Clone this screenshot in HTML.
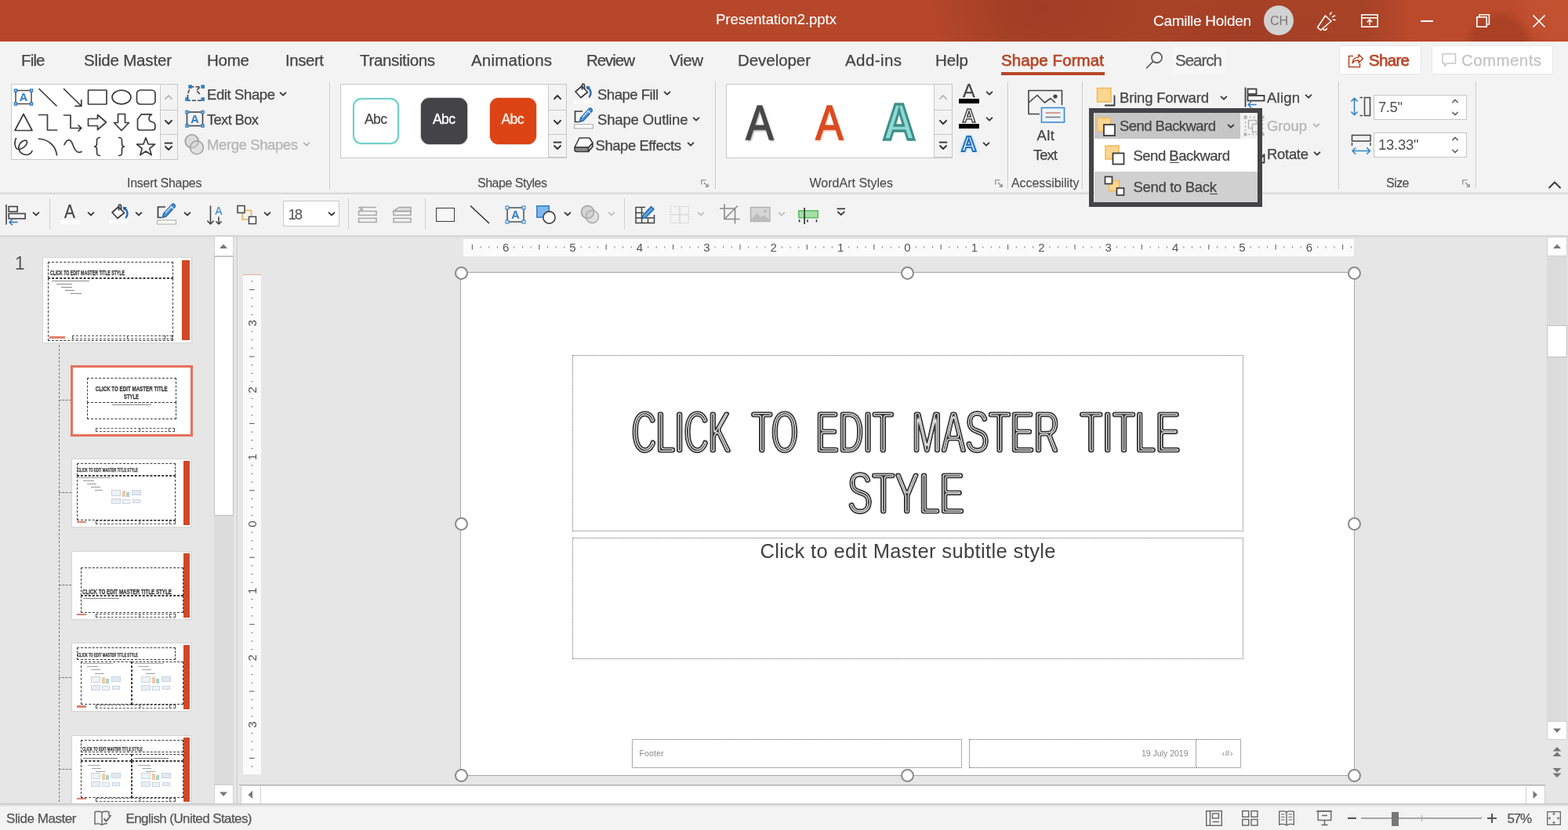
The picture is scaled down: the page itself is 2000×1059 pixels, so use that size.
<!DOCTYPE html>
<html lang="en"><head><meta charset="utf-8"><title>Presentation2.pptx - PowerPoint</title>
<style>
html,body{margin:0;padding:0;}
body{width:2000px;height:1059px;overflow:hidden;background:#e6e6e6;font-family:"Liberation Sans",sans-serif;position:relative;}
#app{position:absolute;left:0;top:0;width:2000px;height:1059px;overflow:hidden;will-change:transform;}
.b{position:absolute;display:block;box-sizing:border-box;}
.t{position:absolute;white-space:nowrap;margin:0;padding:0;-webkit-text-stroke-width:.25px;}
svg text{font-family:"Liberation Sans",sans-serif;}
</style></head>
<body>
<div id="app">
<!-- p1_top -->
<div class="b" style="left:0px;top:0px;width:2000px;height:53px;background:#b7472a;background:radial-gradient(circle 46px at 1912px 58px, rgba(150,52,28,.45) 0,rgba(150,52,28,.45) 70%, rgba(150,52,28,0) 100%),radial-gradient(circle 60px at 1990px 4px, rgba(205,92,55,.35) 0,rgba(205,92,55,.3) 70%, rgba(205,92,55,0) 100%),radial-gradient(ellipse 150px 80px at 1330px 10px, rgba(140,50,28,.35), rgba(140,50,28,0) 100%),radial-gradient(ellipse 120px 60px at 1580px 52px, rgba(140,50,28,.3), rgba(140,50,28,0) 100%),linear-gradient(90deg,#b7472a 0,#b7472a 1180px,#aa4328 1290px,#a74227 1740px,#ba4a2b 1800px,#bb4b2c 2000px);"></div>
<div class="t " style="left:913px;top:13px;font-size:18.5px;line-height:24px;color:#fff;letter-spacing:-0.016px;-webkit-text-stroke-width:.1px;">Presentation2.pptx</div>
<div class="t " style="left:1471px;top:14px;font-size:19px;line-height:25px;color:#fff;letter-spacing:-0.295px;-webkit-text-stroke-width:.1px;">Camille Holden</div>
<div class="b" style="left:1612px;top:7px;width:38px;height:38px;background:#d2d2d2;border-radius:50%;"></div>
<div class="t " style="left:1620px;top:16px;font-size:16px;line-height:21px;color:#777;letter-spacing:-0.110px;-webkit-text-stroke-width:0;">CH</div>
<svg class="b" style="left:1677px;top:12px;" width="30" height="30" viewBox="0 0 30 30"><g fill="none" stroke="#fff" stroke-width="1.6" stroke-linejoin="round" stroke-linecap="round"><path d="M3.5 23 L13.5 8 L21 15 L7.5 26.5 Z"/><path d="M10.5 24.5 C11.5 27.2 14.5 27 15.5 24.2"/><path d="M19.5 6.5 L21 4 M22.5 9.5 L25.5 8 M23.5 13 L26 13.5"/></g></svg>
<svg class="b" style="left:1735px;top:17px;" width="24" height="20" viewBox="0 0 24 20"><g fill="none" stroke="#fff" stroke-width="1.6"><rect x="1.8" y="1.8" width="20.4" height="15.4"/><path d="M1.8 5.8 H22.2"/><path d="M12 15 V8.5 M8.8 11.3 L12 8 L15.2 11.3"/></g></svg>
<div class="b" style="left:1812px;top:26px;width:16px;height:1.8px;background:#fff;"></div>
<svg class="b" style="left:1881px;top:16px;" width="22" height="20" viewBox="0 0 22 20"><g fill="none" stroke="#fff" stroke-width="1.6"><rect x="2.8" y="5.8" width="12.4" height="12.4"/><path d="M6 5.8 V2.8 H18.4 V15 H15.4"/></g></svg>
<svg class="b" style="left:1953px;top:17px;" width="20" height="20" viewBox="0 0 20 20"><g fill="none" stroke="#fff" stroke-width="1.7"><path d="M2.5 2.5 L17.5 17.5 M17.5 2.5 L2.5 17.5"/></g></svg>
<div class="b" style="left:0px;top:53px;width:2000px;height:47px;background:#f3f3f3;"></div>
<div class="t " style="left:27px;top:63px;font-size:20.5px;line-height:27px;color:#444;letter-spacing:-0.845px;">File</div>
<div class="t " style="left:107px;top:63px;font-size:20.5px;line-height:27px;color:#444;letter-spacing:-0.176px;">Slide Master</div>
<div class="t " style="left:264px;top:63px;font-size:20.5px;line-height:27px;color:#444;letter-spacing:-0.228px;">Home</div>
<div class="t " style="left:364px;top:63px;font-size:20.5px;line-height:27px;color:#444;letter-spacing:-0.454px;">Insert</div>
<div class="t " style="left:459px;top:63px;font-size:20.5px;line-height:27px;color:#444;letter-spacing:-0.350px;">Transitions</div>
<div class="t " style="left:601px;top:63px;font-size:20.5px;line-height:27px;color:#444;letter-spacing:0.176px;">Animations</div>
<div class="t " style="left:748px;top:63px;font-size:20.5px;line-height:27px;color:#444;letter-spacing:-1.044px;">Review</div>
<div class="t " style="left:854px;top:63px;font-size:20.5px;line-height:27px;color:#444;letter-spacing:-0.355px;">View</div>
<div class="t " style="left:941px;top:63px;font-size:20.5px;line-height:27px;color:#444;letter-spacing:-0.056px;">Developer</div>
<div class="t " style="left:1078px;top:63px;font-size:20.5px;line-height:27px;color:#444;letter-spacing:0.415px;">Add-ins</div>
<div class="t " style="left:1193px;top:63px;font-size:20.5px;line-height:27px;color:#444;letter-spacing:-0.054px;">Help</div>
<div class="t " style="left:1277px;top:63px;font-size:20.5px;line-height:27px;color:#b7472a;letter-spacing:0.100px;-webkit-text-stroke:.75px #b7472a;">Shape Format</div>
<div class="b" style="left:1277px;top:92px;width:132px;height:3.5px;background:#b7472a;"></div>
<div class="b" style="left:1496px;top:60px;width:66px;height:34px;background:#f7f7f7;"></div>
<svg class="b" style="left:1459px;top:64px;" width="28" height="26" viewBox="0 0 28 26"><g fill="none" stroke="#555" stroke-width="1.6" stroke-linecap="round"><circle cx="16.5" cy="9.5" r="6.6"/><path d="M11.8 14.4 L3.5 22.8"/></g></svg>
<div class="t " style="left:1499px;top:63px;font-size:20.5px;line-height:27px;color:#555;letter-spacing:-0.991px;">Search</div>
<div class="b" style="left:1709px;top:59px;width:103px;height:35px;background:#fff;box-shadow:0 0 2px rgba(0,0,0,.18);border-radius:2px;"></div>
<svg class="b" style="left:1717px;top:65px;" width="24" height="24" viewBox="0 0 24 24"><g fill="none" stroke="#b7472a" stroke-width="1.6" stroke-linejoin="round"><path d="M9 6.5 H3.5 V20.5 H17.5 V16"/><path d="M8 15.5 C8.5 11 11.5 8.2 16 8 V4.5 L21.5 10 L16 15.2 V11.8 C12.5 11.8 10 13 8 15.5 Z"/></g></svg>
<div class="t " style="left:1746px;top:63px;font-size:20.5px;line-height:27px;color:#b7472a;letter-spacing:-0.677px;-webkit-text-stroke:.75px #b7472a;">Share</div>
<div class="b" style="left:1827px;top:59px;width:153px;height:35px;background:#fff;box-shadow:0 0 2px rgba(0,0,0,.14);border-radius:2px;"></div>
<svg class="b" style="left:1837px;top:66px;" width="24" height="24" viewBox="0 0 24 24"><g fill="none" stroke="#c8c8c8" stroke-width="1.5" stroke-linejoin="round"><path d="M3 2.8 H19.5 V14.8 H9 L5.5 18.5 V14.8 H3 Z"/></g></svg>
<div class="t " style="left:1864px;top:63px;font-size:20.5px;line-height:27px;color:#c3c3c3;letter-spacing:0.413px;">Comments</div>
<!-- p2_ribbon -->
<div class="b" style="left:0px;top:100px;width:2000px;height:145px;background:#f3f3f3;"></div>
<div class="b" style="left:0px;top:245.5px;width:2000px;height:2px;background:#dadada;"></div>
<div class="b" style="left:14px;top:107px;width:212.5px;height:96.5px;background:#fff;border:1px solid #c8c8c8;"></div><div class="b" style="left:203.5px;top:107px;width:23px;height:96.5px;background:#f3f3f3;border:1px solid #c8c8c8;"></div><div class="b" style="left:203.5px;top:139.5px;width:23px;height:1px;background:#c8c8c8;"></div><div class="b" style="left:203.5px;top:171px;width:23px;height:1px;background:#c8c8c8;"></div><svg class="b" style="left:207px;top:117.5px;" width="16" height="12" viewBox="0 0 16 12"><path d="M4 8.1 L8 3.9 L12 8.1" fill="none" stroke="#bdbdbd" stroke-width="2.1" stroke-linecap="round" stroke-linejoin="round"/></svg><svg class="b" style="left:207px;top:149.5px;" width="16" height="12" viewBox="0 0 16 12"><path d="M4 3.9 L8 8.1 L12 3.9" fill="none" stroke="#333" stroke-width="2.1" stroke-linecap="round" stroke-linejoin="round"/></svg><svg class="b" style="left:207px;top:179px;" width="16" height="16" viewBox="0 0 16 16"><g fill="none" stroke="#333" stroke-width="1.9" stroke-linejoin="round"><path d="M2.8 3.6 H13.2"/><path d="M4 8 L8 12 L12 8" stroke-linecap="round"/></g></svg><svg class="b" style="left:16px;top:110px;" width="28" height="28" viewBox="0 0 28 28"><rect x="4" y="5.5" width="20" height="17" fill="none" stroke="#5a4a40" stroke-width="1.5"/><g fill="#9ccbf0" stroke="#2f7ec6" stroke-width="1.3"><rect x="2.4" y="3.9" width="3.2" height="3.2"/><rect x="22.4" y="3.9" width="3.2" height="3.2"/><rect x="2.4" y="20.9" width="3.2" height="3.2"/><rect x="22.4" y="20.9" width="3.2" height="3.2"/></g><text x="14" y="19.2" font-size="14.5" font-weight="700" text-anchor="middle" fill="#2f7ec6">A</text></svg><svg class="b" style="left:47px;top:110px;" width="28" height="28" viewBox="0 0 28 28"><g fill="none" stroke="#3c3c3c" stroke-width="1.7" stroke-linejoin="round" stroke-linecap="round"><path d="M3 3.5 L25 25"/></g></svg><svg class="b" style="left:78.5px;top:110px;" width="28" height="28" viewBox="0 0 28 28"><g fill="none" stroke="#3c3c3c" stroke-width="1.7" stroke-linejoin="round" stroke-linecap="round"><path d="M2.5 3.5 L24.5 25 M24.8 17.5 V25.3 H17"/></g></svg><svg class="b" style="left:110px;top:110px;" width="28" height="28" viewBox="0 0 28 28"><g fill="none" stroke="#3c3c3c" stroke-width="1.7" stroke-linejoin="round" stroke-linecap="round"><rect x="2.5" y="5" width="23.5" height="18" rx="0.5"/></g></svg><svg class="b" style="left:141px;top:110px;" width="28" height="28" viewBox="0 0 28 28"><g fill="none" stroke="#3c3c3c" stroke-width="1.7" stroke-linejoin="round" stroke-linecap="round"><ellipse cx="14" cy="14" rx="12" ry="8.8"/></g></svg><svg class="b" style="left:172px;top:110px;" width="28" height="28" viewBox="0 0 28 28"><g fill="none" stroke="#3c3c3c" stroke-width="1.7" stroke-linejoin="round" stroke-linecap="round"><rect x="2.5" y="5" width="23.5" height="18" rx="4.5"/></g></svg><svg class="b" style="left:16px;top:141.5px;" width="28" height="28" viewBox="0 0 28 28"><g fill="none" stroke="#3c3c3c" stroke-width="1.7" stroke-linejoin="round" stroke-linecap="round"><path d="M14 3.5 L25 24.5 H3 Z"/></g></svg><svg class="b" style="left:47px;top:141.5px;" width="28" height="28" viewBox="0 0 28 28"><g fill="none" stroke="#3c3c3c" stroke-width="1.7" stroke-linejoin="round" stroke-linecap="round"><path d="M2.5 4.5 H13.5 V24 H25.5"/></g></svg><svg class="b" style="left:78.5px;top:141.5px;" width="28" height="28" viewBox="0 0 28 28"><g fill="none" stroke="#3c3c3c" stroke-width="1.7" stroke-linejoin="round" stroke-linecap="round"><path d="M2.5 5 H11 V21.5 H24.5 M21 17.8 L24.8 21.5 L21 25.2"/></g></svg><svg class="b" style="left:110px;top:141.5px;" width="28" height="28" viewBox="0 0 28 28"><g fill="none" stroke="#3c3c3c" stroke-width="1.7" stroke-linejoin="round" stroke-linecap="round"><path d="M2.5 9.5 H14.5 V4.5 L25.5 14 L14.5 23.5 V18.5 H2.5 Z"/></g></svg><svg class="b" style="left:141px;top:141.5px;" width="28" height="28" viewBox="0 0 28 28"><g fill="none" stroke="#3c3c3c" stroke-width="1.7" stroke-linejoin="round" stroke-linecap="round"><path d="M9.5 3.5 H18.5 V14.5 H23.5 L14 24.5 L4.5 14.5 H9.5 Z"/></g></svg><svg class="b" style="left:172px;top:141.5px;" width="28" height="28" viewBox="0 0 28 28"><g fill="none" stroke="#3c3c3c" stroke-width="1.7" stroke-linejoin="round" stroke-linecap="round"><path d="M3.5 10 L8.5 3.8 H21.5 C17 6.5 16.5 12.5 22 13.5 C24.5 14 25.8 15.5 25.8 18 V21 C25.8 23 24.5 24 22.5 24 H6.5 C4.6 24 3.5 23 3.5 21.5 Z"/></g></svg><svg class="b" style="left:16px;top:173px;" width="28" height="28" viewBox="0 0 28 28"><g fill="none" stroke="#3c3c3c" stroke-width="1.7" stroke-linejoin="round" stroke-linecap="round"><path d="M4.5 3.5 C1.5 9 3 19 9.5 17.5 C15 16 20 10 18 7 C16 4 9 8.5 8 14 C7 19.5 11.5 24.5 17 24.5 C21 24.5 24 22.5 25 19.5"/></g></svg><svg class="b" style="left:47px;top:173px;" width="28" height="28" viewBox="0 0 28 28"><g fill="none" stroke="#3c3c3c" stroke-width="1.7" stroke-linejoin="round" stroke-linecap="round"><path d="M2.5 4 C14 5 24 12 25.5 25"/></g></svg><svg class="b" style="left:78.5px;top:173px;" width="28" height="28" viewBox="0 0 28 28"><g fill="none" stroke="#3c3c3c" stroke-width="1.7" stroke-linejoin="round" stroke-linecap="round"><path d="M3 11.5 C7 3.5 11 3.5 14 12 C17 20.5 21 23 25 20.5"/></g></svg><svg class="b" style="left:110px;top:173px;" width="28" height="28" viewBox="0 0 28 28"><g fill="none" stroke="#3c3c3c" stroke-width="1.7" stroke-linejoin="round" stroke-linecap="round"><path d="M17.5 2.5 C14 2.5 13.5 4 13.5 6.5 V10.5 C13.5 12.5 12.5 13.8 10.5 14 C12.5 14.2 13.5 15.5 13.5 17.5 V21.5 C13.5 24 14 25.5 17.5 25.5"/></g></svg><svg class="b" style="left:141px;top:173px;" width="28" height="28" viewBox="0 0 28 28"><g fill="none" stroke="#3c3c3c" stroke-width="1.7" stroke-linejoin="round" stroke-linecap="round"><path d="M10.5 2.5 C14 2.5 14.5 4 14.5 6.5 V10.5 C14.5 12.5 15.5 13.8 17.5 14 C15.5 14.2 14.5 15.5 14.5 17.5 V21.5 C14.5 24 14 25.5 10.5 25.5"/></g></svg><svg class="b" style="left:172px;top:173px;" width="28" height="28" viewBox="0 0 28 28"><g fill="none" stroke="#3c3c3c" stroke-width="1.7" stroke-linejoin="round" stroke-linecap="round"><path d="M14 2.8 L17 10.8 L25.6 11.2 L18.8 16.5 L21.2 24.8 L14 20 L6.8 24.8 L9.2 16.5 L2.4 11.2 L11 10.8 Z"/></g></svg>
<svg class="b" style="left:234.5px;top:107px;" width="28" height="26" viewBox="0 0 28 26"><path d="M7.5 3.8 H20.5 L15.5 8.5 L20 13 M22 21.3 H4.5 M4.2 19 C4.4 13 5.5 8.5 8 4.5" fill="none" stroke="#444" stroke-width="1.6" stroke-dasharray="5 2"/><g fill="#2f7ec6"><rect x="5.3" y="1.3" width="4.6" height="4.6"/><rect x="21.4" y="1.3" width="4.6" height="4.6"/><rect x="1.2" y="17.3" width="4.6" height="4.6"/><rect x="21.4" y="17.3" width="4.6" height="4.6"/></g></svg>
<div class="t " style="left:264px;top:108.5px;font-size:18.5px;line-height:24px;color:#444;letter-spacing:-0.391px;">Edit Shape</div>
<svg class="b" style="left:353px;top:113.5px;" width="16" height="12" viewBox="0 0 16 12"><path d="M4.6 4.35 L8 7.65 L11.4 4.35" fill="none" stroke="#3a3a3a" stroke-width="1.9" stroke-linecap="round" stroke-linejoin="round"/></svg>
<svg class="b" style="left:234px;top:138px;" width="28" height="28" viewBox="0 0 28 28"><rect x="4.5" y="5" width="20" height="17.5" fill="none" stroke="#444" stroke-width="1.6"/><g fill="#9ccbf0" stroke="#2f7ec6" stroke-width="1.3"><rect x="2.9" y="3.4" width="3.2" height="3.2"/><rect x="22.9" y="3.4" width="3.2" height="3.2"/><rect x="2.9" y="20.9" width="3.2" height="3.2"/><rect x="22.9" y="20.9" width="3.2" height="3.2"/></g><text x="14.5" y="19.2" font-size="14.5" font-weight="700" text-anchor="middle" fill="#2f7ec6">A</text></svg>
<div class="t " style="left:264px;top:140.5px;font-size:18.5px;line-height:24px;color:#444;letter-spacing:-0.707px;">Text Box</div>
<svg class="b" style="left:234px;top:170px;" width="30" height="30" viewBox="0 0 30 30"><g stroke="#a4a4a4" stroke-width="1.6"><circle cx="10.7" cy="10.2" r="8.4" fill="#dcdcdc"/><circle cx="17" cy="18.3" r="8.4" fill="#dcdcdc" fill-opacity=".8"/><circle cx="10.7" cy="10.2" r="8.4" fill="none" stroke-opacity=".6"/></g></svg>
<div class="t " style="left:264px;top:173px;font-size:18.5px;line-height:24px;color:#b4b4b4;letter-spacing:-0.393px;">Merge Shapes</div>
<svg class="b" style="left:383px;top:178px;" width="16" height="12" viewBox="0 0 16 12"><path d="M4.6 4.35 L8 7.65 L11.4 4.35" fill="none" stroke="#b4b4b4" stroke-width="1.9" stroke-linecap="round" stroke-linejoin="round"/></svg>
<div class="t " style="left:162px;top:223px;font-size:16px;line-height:21px;color:#4a4a4a;letter-spacing:-0.269px;-webkit-text-stroke-width:.1px;">Insert Shapes</div>
<div class="b" style="left:420px;top:104px;width:1px;height:137px;background:#c8c8c8;"></div><div class="b" style="left:421px;top:104px;width:1px;height:137px;background:#fafafa;"></div>
<div class="b" style="left:434px;top:107px;width:289px;height:94.5px;background:#fff;border:1px solid #c8c8c8;"></div>
<div class="b" style="left:699px;top:107px;width:23.5px;height:94px;background:#f3f3f3;border:1px solid #c8c8c8;"></div><div class="b" style="left:699px;top:139.5px;width:23.5px;height:1px;background:#c8c8c8;"></div><div class="b" style="left:699px;top:170.5px;width:23.5px;height:1px;background:#c8c8c8;"></div><svg class="b" style="left:702.75px;top:117.5px;" width="16" height="12" viewBox="0 0 16 12"><path d="M4 8.1 L8 3.9 L12 8.1" fill="none" stroke="#333" stroke-width="2.1" stroke-linecap="round" stroke-linejoin="round"/></svg><svg class="b" style="left:702.75px;top:149.5px;" width="16" height="12" viewBox="0 0 16 12"><path d="M4 3.9 L8 8.1 L12 3.9" fill="none" stroke="#333" stroke-width="2.1" stroke-linecap="round" stroke-linejoin="round"/></svg><svg class="b" style="left:702.75px;top:178px;" width="16" height="16" viewBox="0 0 16 16"><g fill="none" stroke="#333" stroke-width="1.9" stroke-linejoin="round"><path d="M2.8 3.6 H13.2"/><path d="M4 8 L8 12 L12 8" stroke-linecap="round"/></g></svg>
<div class="b" style="left:450px;top:124.5px;width:59px;height:59px;background:#fff;border:2px solid #6fd0ca;border-radius:11px;box-shadow:0 0 2px rgba(111,208,202,.6);"></div>
<div class="t " style="left:465px;top:140.5px;font-size:17.5px;line-height:23px;color:#444;letter-spacing:-0.578px;">Abc</div>
<div class="b" style="left:537px;top:124.5px;width:59px;height:59px;background:#444446;border-radius:11px;box-shadow:0 0 1.5px #222;"></div>
<div class="t " style="left:552px;top:140.5px;font-size:17.5px;line-height:23px;color:#fff;letter-spacing:-0.578px;-webkit-text-stroke:0.4px #fff;">Abc</div>
<div class="b" style="left:624.5px;top:124.5px;width:59px;height:59px;background:#dc4415;border-radius:11px;box-shadow:0 0 1.5px #b8360f;"></div>
<div class="t " style="left:639.5px;top:140.5px;font-size:17.5px;line-height:23px;color:#fdeee6;letter-spacing:-0.578px;-webkit-text-stroke:0.4px #fdeee6;">Abc</div>
<svg class="b" style="left:730px;top:104px;" width="30" height="32" viewBox="0 0 30 32"><g fill="none" stroke="#3c3c3c" stroke-width="1.7" stroke-linejoin="round" stroke-linecap="round"><path d="M12 6 L19.5 13.5 L11 20.5 L4 13 Z" fill="#fff"/><path d="M12.5 10 V4.5 C12.5 2.5 15.5 2.5 15.5 5 V9.2"/></g><path d="M19 8.2 C23.5 9.5 25 14.5 21.8 19.5" fill="none" stroke="#2668ad" stroke-width="2.3" stroke-linecap="round"/><path d="M17.5 5.8 L23 6.4 L19.4 10.8 Z" fill="#2668ad"/><rect x="2" y="23.8" width="25" height="4.2" fill="#fff"/></svg>
<div class="t " style="left:762px;top:108.6px;font-size:18.5px;line-height:24px;color:#444;letter-spacing:-0.474px;">Shape Fill</div>
<svg class="b" style="left:842.5px;top:113px;" width="16" height="12" viewBox="0 0 16 12"><path d="M4.6 4.35 L8 7.65 L11.4 4.35" fill="none" stroke="#3a3a3a" stroke-width="1.9" stroke-linecap="round" stroke-linejoin="round"/></svg>
<svg class="b" style="left:730px;top:136px;" width="30" height="32" viewBox="0 0 30 32"><path d="M13 6 H3.5 V19.5 H8.5" fill="none" stroke="#3c3c3c" stroke-width="1.7"/><path d="M21.8 2.5 C23.5 1.2 26.5 4 25 6 L14 18 L9.2 19.6 L10.6 14.6 Z" fill="#4a97dc" stroke="#2668ad" stroke-width="1.5" stroke-linejoin="round"/><path d="M20 5.2 L23.4 8.6" stroke="#fff" stroke-width="1.1"/><path d="M13 13.5 L21 5" stroke="#d9ecfb" stroke-width="1.2"/><rect x="2.5" y="22.8" width="24" height="5" fill="#fff" stroke="#a8a8a8" stroke-width="1"/></svg>
<div class="t " style="left:762px;top:141.1px;font-size:18.5px;line-height:24px;color:#444;letter-spacing:-0.146px;">Shape Outline</div>
<svg class="b" style="left:879.5px;top:145.5px;" width="16" height="12" viewBox="0 0 16 12"><path d="M4.6 4.35 L8 7.65 L11.4 4.35" fill="none" stroke="#3a3a3a" stroke-width="1.9" stroke-linecap="round" stroke-linejoin="round"/></svg>
<svg class="b" style="left:730px;top:171px;" width="30" height="28" viewBox="0 0 30 28"><g stroke="#3c3c3c" stroke-width="1.6" stroke-linejoin="round"><path d="M9 5 H22 L26 11.5 L20.5 17 H3 Z" fill="#fff"/><path d="M3 17 H20.5 V22.5 H6 C4 22.5 3 21.5 3 20 Z" fill="#8a8a8a"/><path d="M26 11.5 V16 L20.5 22.5 V17 Z" fill="#c4c4c4"/></g></svg>
<div class="t " style="left:759.5px;top:173.7px;font-size:18.5px;line-height:24px;color:#444;letter-spacing:-0.446px;">Shape Effects</div>
<svg class="b" style="left:872.5px;top:178.3px;" width="16" height="12" viewBox="0 0 16 12"><path d="M4.6 4.35 L8 7.65 L11.4 4.35" fill="none" stroke="#3a3a3a" stroke-width="1.9" stroke-linecap="round" stroke-linejoin="round"/></svg>
<div class="t " style="left:609px;top:223px;font-size:16px;line-height:21px;color:#4a4a4a;letter-spacing:-0.480px;-webkit-text-stroke-width:.1px;">Shape Styles</div>
<svg class="b" style="left:894px;top:229px;" width="11" height="11" viewBox="0 0 11 11"><g fill="none" stroke="#808080" stroke-width="1.1"><path d="M0.8 6.5 V0.8 H6.5"/><path d="M4 4 L9 9 M9.2 5.4 V9.2 H5.4"/></g></svg>
<div class="b" style="left:912px;top:104px;width:1px;height:137px;background:#c8c8c8;"></div><div class="b" style="left:913px;top:104px;width:1px;height:137px;background:#fafafa;"></div>
<div class="b" style="left:926px;top:107px;width:289px;height:94.5px;background:#fff;border:1px solid #c8c8c8;"></div>
<div class="b" style="left:1191px;top:107px;width:23.5px;height:94px;background:#f3f3f3;border:1px solid #c8c8c8;"></div><div class="b" style="left:1191px;top:139.5px;width:23.5px;height:1px;background:#c8c8c8;"></div><div class="b" style="left:1191px;top:170.5px;width:23.5px;height:1px;background:#c8c8c8;"></div><svg class="b" style="left:1194.75px;top:117.5px;" width="16" height="12" viewBox="0 0 16 12"><path d="M4 8.1 L8 3.9 L12 8.1" fill="none" stroke="#bdbdbd" stroke-width="2.1" stroke-linecap="round" stroke-linejoin="round"/></svg><svg class="b" style="left:1194.75px;top:149.5px;" width="16" height="12" viewBox="0 0 16 12"><path d="M4 3.9 L8 8.1 L12 3.9" fill="none" stroke="#333" stroke-width="2.1" stroke-linecap="round" stroke-linejoin="round"/></svg><svg class="b" style="left:1194.75px;top:178px;" width="16" height="16" viewBox="0 0 16 16"><g fill="none" stroke="#333" stroke-width="1.9" stroke-linejoin="round"><path d="M2.8 3.6 H13.2"/><path d="M4 8 L8 12 L12 8" stroke-linecap="round"/></g></svg>
<div class="t" style="left:948px;top:121px;width:42px;text-align:center;font-size:63px;line-height:70px;color:#484848;-webkit-text-stroke:1.6px #484848;text-shadow:1.5px 2px 3px rgba(0,0,0,.4);transform:scaleX(.84);">A</div>
<div class="t" style="left:1037px;top:121px;width:42px;text-align:center;font-size:63px;line-height:70px;color:#dc4a1f;-webkit-text-stroke:1.6px #dc4a1f;text-shadow:1px 2px 3px rgba(220,74,31,.45);transform:scaleX(.84);">A</div>
<div class="t" style="left:1124px;top:121px;width:42px;text-align:center;font-size:64px;line-height:70px;color:#8fdad4;font-weight:700;-webkit-text-stroke:3.4px #3f8f89;transform:scaleX(.9);">A</div>
<div class="t " style="left:1228px;top:101px;font-size:23.5px;line-height:31px;color:#444;">A</div>
<div class="b" style="left:1223px;top:126px;width:25.5px;height:6px;background:#000;"></div>
<svg class="b" style="left:1254px;top:113px;" width="16" height="12" viewBox="0 0 16 12"><path d="M4.6 4.35 L8 7.65 L11.4 4.35" fill="none" stroke="#3a3a3a" stroke-width="1.9" stroke-linecap="round" stroke-linejoin="round"/></svg>
<div class="t " style="left:1227.5px;top:133px;font-size:23.5px;line-height:31px;color:#fff;-webkit-text-stroke:1.5px #444;font-weight:700;">A</div>
<div class="b" style="left:1223px;top:158px;width:25.5px;height:6px;background:#000;"></div>
<svg class="b" style="left:1254px;top:145.5px;" width="16" height="12" viewBox="0 0 16 12"><path d="M4.6 4.35 L8 7.65 L11.4 4.35" fill="none" stroke="#3a3a3a" stroke-width="1.9" stroke-linecap="round" stroke-linejoin="round"/></svg>
<div class="t " style="left:1226px;top:166.5px;font-size:27px;line-height:35px;color:#eaf5ff;-webkit-text-stroke:2px #1f6fbf;font-weight:700;text-shadow:0 0 3px #6fb8f5,0 0 5px #9fd0fa;">A</div>
<svg class="b" style="left:1250px;top:178px;" width="16" height="12" viewBox="0 0 16 12"><path d="M4.6 4.35 L8 7.65 L11.4 4.35" fill="none" stroke="#3a3a3a" stroke-width="1.9" stroke-linecap="round" stroke-linejoin="round"/></svg>
<div class="t " style="left:1032.5px;top:223px;font-size:16px;line-height:21px;color:#4a4a4a;letter-spacing:0.008px;-webkit-text-stroke-width:.1px;">WordArt Styles</div>
<svg class="b" style="left:1269px;top:229px;" width="11" height="11" viewBox="0 0 11 11"><g fill="none" stroke="#808080" stroke-width="1.1"><path d="M0.8 6.5 V0.8 H6.5"/><path d="M4 4 L9 9 M9.2 5.4 V9.2 H5.4"/></g></svg>
<div class="b" style="left:1285px;top:104px;width:1px;height:137px;background:#c8c8c8;"></div><div class="b" style="left:1286px;top:104px;width:1px;height:137px;background:#fafafa;"></div>
<svg class="b" style="left:1309px;top:112px;" width="52" height="48" viewBox="0 0 52 48"><g fill="none" stroke="#444" stroke-width="1.6" stroke-linejoin="round"><path d="M17 33.5 H3 V3.5 H45.5 V22"/><path d="M3 19 L14 9.5 L23.5 19 L31 13.5 L37 19"/></g><circle cx="37" cy="11" r="2.6" fill="#444"/><rect x="19.5" y="25.5" width="29" height="18.5" fill="#eaf4fc" stroke="#3b8ad0" stroke-width="1.6"/><path d="M24.5 32 H43.5" stroke="#d0806a" stroke-width="1.5"/><path d="M24.5 37.5 H43.5" stroke="#777" stroke-width="1.5"/></svg>
<div class="t " style="left:1322.5px;top:161px;font-size:18.5px;line-height:24px;color:#444;letter-spacing:0.455px;">Alt</div>
<div class="t " style="left:1318px;top:185.5px;font-size:18.5px;line-height:24px;color:#444;letter-spacing:-0.976px;">Text</div>
<div class="t " style="left:1290px;top:223px;font-size:16px;line-height:21px;color:#4a4a4a;letter-spacing:-0.053px;-webkit-text-stroke-width:.1px;">Accessibility</div>
<div class="b" style="left:1380px;top:104px;width:1px;height:137px;background:#c8c8c8;"></div><div class="b" style="left:1381px;top:104px;width:1px;height:137px;background:#fafafa;"></div>
<svg class="b" style="left:1397px;top:110px;" width="28" height="28" viewBox="0 0 28 28"><path d="M12 24.5 H24.5 V11.5" fill="none" stroke="#3a3a3a" stroke-width="1.8"/><rect x="2.5" y="2.5" width="17.5" height="17.5" fill="#fbd691" stroke="#f3b95b" stroke-width="1.6"/></svg>
<div class="t " style="left:1428px;top:112.5px;font-size:18.5px;line-height:24px;color:#444;letter-spacing:-0.182px;">Bring Forward</div>
<svg class="b" style="left:1552.5px;top:118.5px;" width="16" height="12" viewBox="0 0 16 12"><path d="M4.6 4.35 L8 7.65 L11.4 4.35" fill="none" stroke="#3a3a3a" stroke-width="1.9" stroke-linecap="round" stroke-linejoin="round"/></svg>
<div class="b" style="left:1396px;top:144px;width:186px;height:33px;background:#c6c6c6;"></div>
<svg class="b" style="left:1397px;top:147.5px;" width="28" height="28" viewBox="0 0 28 28"><rect x="2.5" y="2.5" width="17" height="17" fill="#fbd691" stroke="#f3b95b" stroke-width="1.6"/><rect x="11" y="11" width="14" height="14" fill="#fff" stroke="#3a3a3a" stroke-width="1.8"/></svg>
<div class="t " style="left:1428px;top:149px;font-size:18.5px;line-height:24px;color:#444;letter-spacing:-0.548px;">Send Backward</div>
<svg class="b" style="left:1561.5px;top:155px;" width="16" height="12" viewBox="0 0 16 12"><path d="M4.6 4.35 L8 7.65 L11.4 4.35" fill="none" stroke="#3a3a3a" stroke-width="1.9" stroke-linecap="round" stroke-linejoin="round"/></svg>
<svg class="b" style="left:1585px;top:110px;" width="30" height="28" viewBox="0 0 30 28"><g fill="none" stroke="#3a3a3a" stroke-width="1.8"><path d="M3.5 1.5 V26.5"/><rect x="6.5" y="3.5" width="11" height="6.5" fill="#fff"/><rect x="6.5" y="12" width="21" height="6.5" fill="#fff"/></g><path d="M17 23.5 H7 M10.5 20 L7 23.5 L10.5 27" fill="none" stroke="#2f7ec6" stroke-width="1.6" stroke-linecap="round" stroke-linejoin="round"/></svg>
<div class="t " style="left:1616px;top:112.5px;font-size:18.5px;line-height:24px;color:#444;letter-spacing:0.215px;">Align</div>
<svg class="b" style="left:1661px;top:117px;" width="16" height="12" viewBox="0 0 16 12"><path d="M4.6 4.35 L8 7.65 L11.4 4.35" fill="none" stroke="#3a3a3a" stroke-width="1.9" stroke-linecap="round" stroke-linejoin="round"/></svg>
<svg class="b" style="left:1585px;top:146px;" width="30" height="30" viewBox="0 0 30 30"><g fill="none" stroke="#b4b4b4" stroke-width="1.4"><rect x="3.5" y="3.5" width="22" height="22" stroke-dasharray="2.5 2.5"/><rect x="7.5" y="7.5" width="10" height="10" fill="#f3f3f3"/><rect x="12.5" y="12.5" width="10" height="10" fill="#f3f3f3"/></g><g fill="#b4b4b4"><rect x="1.5" y="1.5" width="4" height="4"/><rect x="23.5" y="1.5" width="4" height="4"/><rect x="1.5" y="23.5" width="4" height="4"/><rect x="23.5" y="23.5" width="4" height="4"/></g></svg>
<div class="t " style="left:1616px;top:149px;font-size:18.5px;line-height:24px;color:#b4b4b4;letter-spacing:-0.105px;">Group</div>
<svg class="b" style="left:1670.5px;top:154px;" width="16" height="12" viewBox="0 0 16 12"><path d="M4.6 4.35 L8 7.65 L11.4 4.35" fill="none" stroke="#b4b4b4" stroke-width="1.9" stroke-linecap="round" stroke-linejoin="round"/></svg>
<svg class="b" style="left:1585px;top:183px;" width="30" height="28" viewBox="0 0 30 28"><g fill="none" stroke="#3a3a3a" stroke-width="1.8" stroke-linejoin="round"><path d="M3.5 24.5 H16.5 L3.5 11.5 Z" fill="#fff"/><path d="M19 24.5 H27.5 V14 Z" fill="#fff"/></g></svg>
<div class="t " style="left:1616px;top:185px;font-size:18.5px;line-height:24px;color:#444;letter-spacing:-0.301px;">Rotate</div>
<svg class="b" style="left:1671.5px;top:190px;" width="16" height="12" viewBox="0 0 16 12"><path d="M4.6 4.35 L8 7.65 L11.4 4.35" fill="none" stroke="#3a3a3a" stroke-width="1.9" stroke-linecap="round" stroke-linejoin="round"/></svg>
<div class="b" style="left:1707px;top:104px;width:1px;height:137px;background:#c8c8c8;"></div><div class="b" style="left:1708px;top:104px;width:1px;height:137px;background:#fafafa;"></div>
<svg class="b" style="left:1721px;top:121px;" width="30" height="30" viewBox="0 0 30 30"><g fill="none" stroke="#444" stroke-width="1.5"><rect x="19.5" y="3.5" width="7" height="23"/><path d="M13.5 3.5 H17 M13.5 26.5 H17"/></g><g fill="none" stroke="#2f86c8" stroke-width="1.6" stroke-linecap="round" stroke-linejoin="round"><path d="M6.5 4.5 V25.5 M2.8 8 L6.5 4.2 L10.2 8 M2.8 22 L6.5 25.8 L10.2 22"/></g></svg>
<div class="b" style="left:1752px;top:120.5px;width:119px;height:32px;background:#fff;border:1px solid #c6c6c6;"></div>
<div class="t " style="left:1758px;top:125px;font-size:18.5px;line-height:24px;color:#505050;letter-spacing:-0.428px;-webkit-text-stroke-width:0;">7.5&quot;</div>
<svg class="b" style="left:1848px;top:123px;" width="16" height="12" viewBox="0 0 16 12"><path d="M4.75 7.6 L8 4.4 L11.25 7.6" fill="none" stroke="#666" stroke-width="1.5" stroke-linecap="round" stroke-linejoin="round"/></svg>
<svg class="b" style="left:1848px;top:139px;" width="16" height="12" viewBox="0 0 16 12"><path d="M4.75 4.4 L8 7.6 L11.25 4.4" fill="none" stroke="#666" stroke-width="1.5" stroke-linecap="round" stroke-linejoin="round"/></svg>
<svg class="b" style="left:1721px;top:169px;" width="30" height="30" viewBox="0 0 30 30"><g fill="none" stroke="#444" stroke-width="1.5"><rect x="3.5" y="3.5" width="23.5" height="7.5"/><path d="M3.5 13 V17 M27 13 V17"/></g><g fill="none" stroke="#2f86c8" stroke-width="1.6" stroke-linecap="round" stroke-linejoin="round"><path d="M4 23.5 H26.5 M7.8 19.8 L4 23.5 L7.8 27.2 M22.7 19.8 L26.5 23.5 L22.7 27.2"/></g></svg>
<div class="b" style="left:1752px;top:168.5px;width:119px;height:32px;background:#fff;border:1px solid #c6c6c6;"></div>
<div class="t " style="left:1758px;top:173px;font-size:18.5px;line-height:24px;color:#505050;letter-spacing:-0.273px;-webkit-text-stroke-width:0;">13.33&quot;</div>
<svg class="b" style="left:1848px;top:170.5px;" width="16" height="12" viewBox="0 0 16 12"><path d="M4.75 7.6 L8 4.4 L11.25 7.6" fill="none" stroke="#666" stroke-width="1.5" stroke-linecap="round" stroke-linejoin="round"/></svg>
<svg class="b" style="left:1848px;top:186.5px;" width="16" height="12" viewBox="0 0 16 12"><path d="M4.75 4.4 L8 7.6 L11.25 4.4" fill="none" stroke="#666" stroke-width="1.5" stroke-linecap="round" stroke-linejoin="round"/></svg>
<div class="t " style="left:1768px;top:223px;font-size:16px;line-height:21px;color:#4a4a4a;letter-spacing:-0.542px;-webkit-text-stroke-width:.1px;">Size</div>
<svg class="b" style="left:1865px;top:229px;" width="11" height="11" viewBox="0 0 11 11"><g fill="none" stroke="#808080" stroke-width="1.1"><path d="M0.8 6.5 V0.8 H6.5"/><path d="M4 4 L9 9 M9.2 5.4 V9.2 H5.4"/></g></svg>
<div class="b" style="left:1882px;top:104px;width:1px;height:137px;background:#c8c8c8;"></div><div class="b" style="left:1883px;top:104px;width:1px;height:137px;background:#fafafa;"></div>
<svg class="b" style="left:1974.5px;top:229.5px;" width="16" height="12" viewBox="0 0 16 12"><path d="M1 9.5 L8 2.5 L15 9.5" fill="none" stroke="#333" stroke-width="1.8" stroke-linecap="round" stroke-linejoin="round"/></svg>
<!-- p3_qat -->
<div class="b" style="left:0px;top:247.5px;width:2000px;height:52px;background:#f3f3f3;"></div>
<div class="b" style="left:0px;top:299.5px;width:2000px;height:4px;background:transparent;background:linear-gradient(#d4d4d4,#dedede 60%,#e6e6e6);"></div>
<svg class="b" style="left:5px;top:259px;" width="30" height="30" viewBox="0 0 30 30"><g fill="none" stroke="#444" stroke-width="1.6"><path d="M3 2 V27.5"/><rect x="6.2" y="4.5" width="11" height="6.5" fill="#f3f3f3"/><rect x="6.2" y="13.5" width="21" height="6.5" fill="#f3f3f3"/></g><path d="M17 24.5 H7 M10.5 21 L7 24.5 L10.5 28" fill="none" stroke="#2f7ec6" stroke-width="1.6" stroke-linecap="round" stroke-linejoin="round"/></svg>
<svg class="b" style="left:38px;top:267px;" width="16" height="12" viewBox="0 0 16 12"><path d="M4.6 4.35 L8 7.65 L11.4 4.35" fill="none" stroke="#3a3a3a" stroke-width="1.9" stroke-linecap="round" stroke-linejoin="round"/></svg>
<div class="b" style="left:63px;top:253px;width:1px;height:40px;background:#d0d0d0;"></div>
<div class="t " style="left:82.2px;top:255px;font-size:23px;line-height:30px;color:#444;transform:scaleX(.9);transform-origin:left;">A</div>
<div class="b" style="left:77px;top:281px;width:25px;height:4.5px;background:#fff;"></div>
<svg class="b" style="left:107.5px;top:267px;" width="16" height="12" viewBox="0 0 16 12"><path d="M4.6 4.35 L8 7.65 L11.4 4.35" fill="none" stroke="#3a3a3a" stroke-width="1.9" stroke-linecap="round" stroke-linejoin="round"/></svg>
<svg class="b" style="left:139px;top:257.5px;" width="30" height="32" viewBox="0 0 30 32"><g fill="none" stroke="#3c3c3c" stroke-width="1.7" stroke-linejoin="round" stroke-linecap="round"><path d="M12 6 L19.5 13.5 L11 20.5 L4 13 Z" fill="#fff"/><path d="M12.5 10 V4.5 C12.5 2.5 15.5 2.5 15.5 5 V9.2"/></g><path d="M19 8.2 C23.5 9.5 25 14.5 21.8 19.5" fill="none" stroke="#2668ad" stroke-width="2.3" stroke-linecap="round"/><path d="M17.5 5.8 L23 6.4 L19.4 10.8 Z" fill="#2668ad"/></svg>
<div class="b" style="left:138.5px;top:280.5px;width:24px;height:4.8px;background:#fff;"></div>
<svg class="b" style="left:169px;top:267px;" width="16" height="12" viewBox="0 0 16 12"><path d="M4.6 4.35 L8 7.65 L11.4 4.35" fill="none" stroke="#3a3a3a" stroke-width="1.9" stroke-linecap="round" stroke-linejoin="round"/></svg>
<svg class="b" style="left:198px;top:257.5px;" width="30" height="32" viewBox="0 0 30 32"><path d="M13 6 H3.5 V19.5 H8.5" fill="none" stroke="#3c3c3c" stroke-width="1.7"/><path d="M21.8 2.5 C23.5 1.2 26.5 4 25 6 L14 18 L9.2 19.6 L10.6 14.6 Z" fill="#4a97dc" stroke="#2668ad" stroke-width="1.5" stroke-linejoin="round"/><path d="M20 5.2 L23.4 8.6" stroke="#fff" stroke-width="1.1"/><path d="M13 13.5 L21 5" stroke="#d9ecfb" stroke-width="1.2"/><rect x="2.5" y="23" width="24" height="5" fill="#fff" stroke="#a8a8a8" stroke-width="1"/></svg>
<svg class="b" style="left:230.5px;top:267px;" width="16" height="12" viewBox="0 0 16 12"><path d="M4.6 4.35 L8 7.65 L11.4 4.35" fill="none" stroke="#3a3a3a" stroke-width="1.9" stroke-linecap="round" stroke-linejoin="round"/></svg>
<svg class="b" style="left:262px;top:260px;" width="26" height="30" viewBox="0 0 26 30"><g fill="none" stroke="#444" stroke-width="1.6" stroke-linecap="round" stroke-linejoin="round"><path d="M6.5 3 V26 M2.8 22 L6.5 26 L10.2 22"/><path d="M17 17 V26 M13.8 22.8 L17 26 L20.2 22.8"/></g><text x="17" y="14" font-size="14" text-anchor="middle" fill="#2f7ec6">A</text></svg>
<svg class="b" style="left:300px;top:260px;" width="30" height="28" viewBox="0 0 30 28"><rect x="9" y="8.5" width="11.5" height="11.5" fill="none" stroke="#f0b060" stroke-width="1.6"/><rect x="3" y="2.5" width="9" height="9" fill="#f3f3f3" stroke="#444" stroke-width="1.5"/><rect x="17.5" y="16.5" width="9" height="9" fill="#fff" stroke="#444" stroke-width="1.5"/></svg>
<svg class="b" style="left:333px;top:267px;" width="16" height="12" viewBox="0 0 16 12"><path d="M4.6 4.35 L8 7.65 L11.4 4.35" fill="none" stroke="#3a3a3a" stroke-width="1.9" stroke-linecap="round" stroke-linejoin="round"/></svg>
<div class="b" style="left:360.5px;top:256px;width:72px;height:32.5px;background:#fff;border:1px solid #c8c8c8;"></div>
<div class="t " style="left:367.5px;top:261.5px;font-size:18.5px;line-height:24px;color:#505050;letter-spacing:-2.078px;-webkit-text-stroke-width:0;">18</div>
<svg class="b" style="left:415px;top:267px;" width="16" height="12" viewBox="0 0 16 12"><path d="M4.6 4.35 L8 7.65 L11.4 4.35" fill="none" stroke="#3a3a3a" stroke-width="1.9" stroke-linecap="round" stroke-linejoin="round"/></svg>
<div class="b" style="left:444px;top:253px;width:1px;height:40px;background:#d0d0d0;"></div>
<svg class="b" style="left:455px;top:262px;" width="28" height="24" viewBox="0 0 28 24"><g fill="none" stroke="#a6a6a6" stroke-width="1.5"><path d="M2.5 2.5 H25"/><rect x="2.5" y="7.5" width="22.5" height="5"/><rect x="2.5" y="16.5" width="22.5" height="5"/><path d="M3 3 L7.5 5.2 L3 7.5" /></g></svg>
<svg class="b" style="left:499px;top:262px;" width="28" height="24" viewBox="0 0 28 24"><g fill="none" stroke="#a6a6a6" stroke-width="1.5"><path d="M10 2.5 H25 V7.5 H3 Z" fill="#e0e0e0"/><rect x="3" y="7.5" width="22" height="5"/><rect x="3" y="16.5" width="22" height="5"/></g></svg>
<div class="b" style="left:541.5px;top:253px;width:1px;height:40px;background:#d0d0d0;"></div>
<div class="b" style="left:555.5px;top:264.5px;width:24.5px;height:18.5px;background:#f6f6f6;border:1.7px solid #3a3a3a;"></div>
<svg class="b" style="left:598px;top:260px;" width="28" height="28" viewBox="0 0 28 28"><path d="M2.5 3 L25.5 24.5" stroke="#3a3a3a" stroke-width="1.7" fill="none" stroke-linecap="round"/></svg>
<svg class="b" style="left:643px;top:260px;" width="30" height="28" viewBox="0 0 30 28"><rect x="4" y="5" width="21" height="18" fill="none" stroke="#444" stroke-width="1.4"/><g fill="#fff" stroke="#3b8ad0" stroke-width="1.2"><rect x="2.1" y="3.1" width="3.8" height="3.8"/><rect x="23.1" y="3.1" width="3.8" height="3.8"/><rect x="2.1" y="21.1" width="3.8" height="3.8"/><rect x="23.1" y="21.1" width="3.8" height="3.8"/></g><text x="14.5" y="19.2" font-size="14.5" font-weight="700" text-anchor="middle" fill="#2f7ec6">A</text></svg>
<svg class="b" style="left:682px;top:260px;" width="30" height="28" viewBox="0 0 30 28"><rect x="2.8" y="2.8" width="15.5" height="14.5" fill="#7fb8ee" stroke="#2f7ec6" stroke-width="1.5"/><circle cx="18.5" cy="17.5" r="7.6" fill="#fff" stroke="#444" stroke-width="1.6"/></svg>
<svg class="b" style="left:715.5px;top:267px;" width="16" height="12" viewBox="0 0 16 12"><path d="M4.6 4.35 L8 7.65 L11.4 4.35" fill="none" stroke="#3a3a3a" stroke-width="1.9" stroke-linecap="round" stroke-linejoin="round"/></svg>
<svg class="b" style="left:739px;top:260px;" width="30" height="28" viewBox="0 0 30 28"><g stroke="#a9a9a9" stroke-width="1.4"><circle cx="10.5" cy="10.5" r="8" fill="#d4d4d4"/><circle cx="16.5" cy="16.5" r="8" fill="#d4d4d4" fill-opacity=".6"/><circle cx="10.5" cy="10.5" r="8" fill="none"/></g></svg>
<svg class="b" style="left:771.5px;top:267px;" width="16" height="12" viewBox="0 0 16 12"><path d="M4.6 4.35 L8 7.65 L11.4 4.35" fill="none" stroke="#c0c0c0" stroke-width="1.9" stroke-linecap="round" stroke-linejoin="round"/></svg>
<div class="b" style="left:795.5px;top:253px;width:1px;height:40px;background:#d0d0d0;"></div>
<svg class="b" style="left:808px;top:260px;" width="30" height="28" viewBox="0 0 30 28"><g fill="none" stroke="#444" stroke-width="1.5"><path d="M15 4.5 H3 V24.5 H26.5 V14"/><path d="M3 11.5 H13 M3 18 H26.5 M10.5 4.5 V24.5 M18.5 18 V24.5"/></g><path d="M22.5 3.5 L26 7 L15.5 17.5 L11 19 L12.4 14.5 Z" fill="#5aa3e0" stroke="#2668ad" stroke-width="1.5" stroke-linejoin="round"/></svg>
<svg class="b" style="left:853px;top:260px;" width="28" height="28" viewBox="0 0 28 28"><g fill="none" stroke="#d0d0d0" stroke-width="1.2"><rect x="2.5" y="3.5" width="23" height="21" stroke-dasharray="2 1.5"/><path d="M14 3.5 V24.5 M2.5 14 H25.5"/></g></svg>
<svg class="b" style="left:886px;top:267px;" width="16" height="12" viewBox="0 0 16 12"><path d="M4.6 4.35 L8 7.65 L11.4 4.35" fill="none" stroke="#c0c0c0" stroke-width="1.9" stroke-linecap="round" stroke-linejoin="round"/></svg>
<svg class="b" style="left:916px;top:258px;" width="30" height="30" viewBox="0 0 30 30"><g fill="none" stroke="#8a8a8a" stroke-width="1.6"><path d="M8 2.5 V21.5 H27.5"/><path d="M2 8 H21.5 V27.5"/><path d="M9 20.5 L25 4.5"/></g></svg>
<svg class="b" style="left:955px;top:262px;" width="30" height="24" viewBox="0 0 30 24"><rect x="2.5" y="2.5" width="24.5" height="18" fill="#d6d6d6" stroke="#b0b0b0" stroke-width="1.4"/><path d="M3 18 L10.5 10 L16 15.5 L19.5 12.5 L26.5 18.5 V20 H3 Z" fill="#bcbcbc"/><circle cx="21" cy="7.5" r="1.8" fill="#bcbcbc"/></svg>
<svg class="b" style="left:988.5px;top:267px;" width="16" height="12" viewBox="0 0 16 12"><path d="M4.6 4.35 L8 7.65 L11.4 4.35" fill="none" stroke="#c0c0c0" stroke-width="1.9" stroke-linecap="round" stroke-linejoin="round"/></svg>
<svg class="b" style="left:1016px;top:262px;" width="30" height="26" viewBox="0 0 30 26"><rect x="2.8" y="6.8" width="24.4" height="9" fill="#a3e0a6" stroke="#5cba62" stroke-width="1.5"/><path d="M10.1 3 V24" stroke="#333" stroke-width="1.7"/><path d="M3.6 18.2 V21.4 M14 18.2 V21.4 M25.5 18.2 V21.4" stroke="#333" stroke-width="1.6"/></svg>
<svg class="b" style="left:1065px;top:262.5px;" width="16" height="16" viewBox="0 0 16 16"><path d="M2.6 3.4 H13" stroke="#333" stroke-width="1.7" fill="none"/><path d="M3.8 7.4 L7.8 11.2 L11.8 7.4" fill="none" stroke="#333" stroke-width="1.8" stroke-linecap="round" stroke-linejoin="round"/></svg>
<!-- p4_left -->
<div class="b" style="left:0px;top:303.5px;width:2000px;height:725px;background:#e6e6e6;"></div>
<div class="t " style="left:18.5px;top:320px;font-size:24.5px;line-height:32px;color:#555;-webkit-text-stroke-width:0;transform:scaleX(.92);transform-origin:left;">1</div>
<div class="b" style="left:75px;top:440px;width:1px;height:588px;background:transparent;border-left:1px dashed #777;"></div>
<div class="b" style="left:75px;top:510px;width:16px;height:1px;background:transparent;border-top:1px dashed #777;"></div>
<div class="b" style="left:75px;top:628px;width:16px;height:1px;background:transparent;border-top:1px dashed #777;"></div>
<div class="b" style="left:75px;top:746px;width:16px;height:1px;background:transparent;border-top:1px dashed #777;"></div>
<div class="b" style="left:75px;top:864px;width:16px;height:1px;background:transparent;border-top:1px dashed #777;"></div>
<div class="b" style="left:75px;top:981px;width:16px;height:1px;background:transparent;border-top:1px dashed #777;"></div>
<div class="b" style="left:54.5px;top:329px;width:189px;height:107.5px;background:#fff;box-shadow:0 0 0 1px #d4d4d4;"></div>
<div class="b" style="left:232px;top:331.5px;width:10px;height:102.5px;background:#d24726;"></div>
<div class="b" style="left:61px;top:334px;width:160px;height:21px;background:transparent;border:1px dashed #3a3a3a;"></div>
<div class="b" style="left:61px;top:355px;width:160px;height:80px;background:transparent;border:1px dashed #3a3a3a;"></div>
<div class="t" style="left:63.5px;top:343px;font-size:9px;line-height:10.5px;font-weight:700;color:#333;transform:scaleX(0.576);transform-origin:left top;">CLICK TO EDIT MASTER TITLE STYLE</div>
<div class="b" style="left:66px;top:357.5px;width:48px;height:1px;background:#8a8a8a;"></div><div class="b" style="left:72px;top:361.7px;width:20px;height:1px;background:#8a8a8a;"></div><div class="b" style="left:78px;top:365.9px;width:14px;height:1px;background:#8a8a8a;"></div><div class="b" style="left:83px;top:370.1px;width:12px;height:1px;background:#8a8a8a;"></div><div class="b" style="left:90px;top:374.3px;width:14px;height:1px;background:#8a8a8a;"></div>
<div class="b" style="left:63px;top:429px;width:20px;height:2.5px;background:#e0806a;"></div>
<div class="b" style="left:92px;top:428px;width:128px;height:5px;background:transparent;border:1px dashed #555;"></div><div class="b" style="left:162.4px;top:428px;width:1px;height:5px;background:#555;"></div><div class="b" style="left:209.76px;top:428px;width:1px;height:5px;background:#555;"></div>
<div class="b" style="left:90px;top:465.5px;width:156px;height:91px;background:#fff;border:3px solid #e8705a;"></div>
<div class="b" style="left:111px;top:481.5px;width:114px;height:32px;background:transparent;border:1px dashed #3a3a3a;"></div>
<div class="b" style="left:111px;top:513px;width:114px;height:22px;background:transparent;border:1px dashed #3a3a3a;"></div>
<div class="t" style="left:95.8336px;top:490.5px;width:143.333px;text-align:center;font-size:9px;line-height:10.5px;font-weight:700;color:#333;transform:scaleX(0.690);transform-origin:center top;">CLICK TO EDIT MASTER TITLE</div>
<div class="t" style="left:147.997px;top:501px;width:39.0053px;text-align:center;font-size:9px;line-height:10.5px;font-weight:700;color:#333;transform:scaleX(0.655);transform-origin:center top;">STYLE</div>
<div class="b" style="left:143px;top:515.5px;width:50px;height:1.2px;background:#8a8a8a;"></div>
<div class="b" style="left:122px;top:545.5px;width:101px;height:5px;background:transparent;border:1px dashed #555;"></div><div class="b" style="left:177.55px;top:545.5px;width:1px;height:5px;background:#555;"></div><div class="b" style="left:214.92px;top:545.5px;width:1px;height:5px;background:#555;"></div>
<div class="b" style="left:92px;top:585.5px;width:151px;height:86px;background:#fff;box-shadow:0 0 0 1px #d4d4d4;"></div><div class="b" style="left:234px;top:587.5px;width:7.5px;height:82px;background:#d24726;"></div><div class="b" style="left:98px;top:664.5px;width:12px;height:2.5px;background:#e0806a;"></div>
<div class="b" style="left:98px;top:590.5px;width:126px;height:16px;background:transparent;border:1px dashed #3a3a3a;"></div>
<div class="b" style="left:98px;top:606.5px;width:126px;height:57px;background:transparent;border:1px dashed #3a3a3a;"></div>
<div class="t" style="left:99px;top:596px;font-size:7.2px;line-height:8.7px;font-weight:700;color:#333;transform:scaleX(0.584);transform-origin:left top;">CLICK TO EDIT MASTER TITLE STYLE</div>
<div class="b" style="left:101px;top:608.5px;width:40px;height:1px;background:#9a9a9a;"></div><div class="b" style="left:106px;top:612.7px;width:14px;height:1px;background:#9a9a9a;"></div><div class="b" style="left:111px;top:616.9px;width:12px;height:1px;background:#9a9a9a;"></div><div class="b" style="left:116px;top:621.1px;width:12px;height:1px;background:#9a9a9a;"></div><div class="b" style="left:121px;top:625.3px;width:10px;height:1px;background:#9a9a9a;"></div>
<div class="b" style="left:142px;top:624.5px;width:12px;height:8px;background:#eef3f8;border:1px solid #c9d3dd;"></div><div class="b" style="left:156px;top:625.5px;width:4px;height:8px;background:#f0c9a8;"></div><div class="b" style="left:161px;top:627.5px;width:4px;height:6px;background:#a8d4c0;"></div><div class="b" style="left:168px;top:624.5px;width:12px;height:7px;background:#dfeaf3;border:1px solid #c9d3dd;"></div><div class="b" style="left:142px;top:635.5px;width:12px;height:7px;background:#e9eef4;border:1px solid #cdd5dd;"></div><div class="b" style="left:156px;top:636.5px;width:10px;height:6px;background:#eef3f8;border:1px solid #cdd5dd;"></div><div class="b" style="left:169px;top:636.5px;width:10px;height:5px;background:#e6eef5;border:1px solid #cdd5dd;"></div>
<div class="b" style="left:122px;top:663.5px;width:102px;height:5px;background:transparent;border:1px dashed #555;"></div><div class="b" style="left:178.1px;top:663.5px;width:1px;height:5px;background:#555;"></div><div class="b" style="left:215.84px;top:663.5px;width:1px;height:5px;background:#555;"></div>
<div class="b" style="left:92px;top:703.5px;width:151px;height:86px;background:#fff;box-shadow:0 0 0 1px #d4d4d4;"></div><div class="b" style="left:234px;top:705.5px;width:7.5px;height:82px;background:#d24726;"></div><div class="b" style="left:98px;top:782.5px;width:12px;height:2.5px;background:#e0806a;"></div>
<div class="b" style="left:103px;top:723.5px;width:131px;height:36px;background:transparent;border:1px dashed #3a3a3a;"></div>
<div class="b" style="left:103px;top:759.5px;width:131px;height:22px;background:transparent;border:1px dashed #3a3a3a;"></div>
<div class="t" style="left:104.5px;top:749px;font-size:9.5px;line-height:11px;font-weight:700;color:#333;transform:scaleX(0.655);transform-origin:left top;">CLICK TO EDIT MASTER TITLE STYLE</div>
<div class="b" style="left:106px;top:762.5px;width:46px;height:1.2px;background:#8a8a8a;"></div>
<div class="b" style="left:122px;top:782.5px;width:102px;height:5px;background:transparent;border:1px dashed #555;"></div><div class="b" style="left:178.1px;top:782.5px;width:1px;height:5px;background:#555;"></div><div class="b" style="left:215.84px;top:782.5px;width:1px;height:5px;background:#555;"></div>
<div class="b" style="left:92px;top:821px;width:151px;height:86px;background:#fff;box-shadow:0 0 0 1px #d4d4d4;"></div><div class="b" style="left:234px;top:823px;width:7.5px;height:82px;background:#d24726;"></div><div class="b" style="left:98px;top:900px;width:12px;height:2.5px;background:#e0806a;"></div>
<div class="b" style="left:98px;top:826px;width:126px;height:16px;background:transparent;border:1px dashed #3a3a3a;"></div>
<div class="b" style="left:103px;top:844px;width:65px;height:55px;background:transparent;border:1px dashed #3a3a3a;"></div>
<div class="b" style="left:168px;top:844px;width:66px;height:55px;background:transparent;border:1px dashed #3a3a3a;"></div>
<div class="t" style="left:99px;top:831.5px;font-size:7.2px;line-height:8.7px;font-weight:700;color:#333;transform:scaleX(0.584);transform-origin:left top;">CLICK TO EDIT MASTER TITLE STYLE</div>
<div class="b" style="left:106px;top:846px;width:38px;height:1px;background:#a0a0a0;"></div><div class="b" style="left:111px;top:850.2px;width:14px;height:1px;background:#a0a0a0;"></div><div class="b" style="left:116px;top:854.4px;width:12px;height:1px;background:#a0a0a0;"></div><div class="b" style="left:121px;top:858.6px;width:12px;height:1px;background:#a0a0a0;"></div>
<div class="b" style="left:171px;top:846px;width:38px;height:1px;background:#a0a0a0;"></div><div class="b" style="left:176px;top:850.2px;width:14px;height:1px;background:#a0a0a0;"></div><div class="b" style="left:181px;top:854.4px;width:12px;height:1px;background:#a0a0a0;"></div><div class="b" style="left:186px;top:858.6px;width:12px;height:1px;background:#a0a0a0;"></div>
<div class="b" style="left:116px;top:863px;width:12px;height:8px;background:#eef3f8;border:1px solid #c9d3dd;"></div><div class="b" style="left:130px;top:864px;width:4px;height:8px;background:#f0c9a8;"></div><div class="b" style="left:135px;top:866px;width:4px;height:6px;background:#a8d4c0;"></div><div class="b" style="left:142px;top:863px;width:12px;height:7px;background:#dfeaf3;border:1px solid #c9d3dd;"></div><div class="b" style="left:116px;top:874px;width:12px;height:7px;background:#e9eef4;border:1px solid #cdd5dd;"></div><div class="b" style="left:130px;top:875px;width:10px;height:6px;background:#eef3f8;border:1px solid #cdd5dd;"></div><div class="b" style="left:143px;top:875px;width:10px;height:5px;background:#e6eef5;border:1px solid #cdd5dd;"></div>
<div class="b" style="left:180px;top:863px;width:12px;height:8px;background:#eef3f8;border:1px solid #c9d3dd;"></div><div class="b" style="left:194px;top:864px;width:4px;height:8px;background:#f0c9a8;"></div><div class="b" style="left:199px;top:866px;width:4px;height:6px;background:#a8d4c0;"></div><div class="b" style="left:206px;top:863px;width:12px;height:7px;background:#dfeaf3;border:1px solid #c9d3dd;"></div><div class="b" style="left:180px;top:874px;width:12px;height:7px;background:#e9eef4;border:1px solid #cdd5dd;"></div><div class="b" style="left:194px;top:875px;width:10px;height:6px;background:#eef3f8;border:1px solid #cdd5dd;"></div><div class="b" style="left:207px;top:875px;width:10px;height:5px;background:#e6eef5;border:1px solid #cdd5dd;"></div>
<div class="b" style="left:122px;top:899px;width:102px;height:5px;background:transparent;border:1px dashed #555;"></div><div class="b" style="left:178.1px;top:899px;width:1px;height:5px;background:#555;"></div><div class="b" style="left:215.84px;top:899px;width:1px;height:5px;background:#555;"></div>
<div class="b" style="left:92px;top:938.5px;width:151px;height:86px;background:#fff;box-shadow:0 0 0 1px #d4d4d4;"></div><div class="b" style="left:234px;top:940.5px;width:7.5px;height:82px;background:#d24726;"></div><div class="b" style="left:98px;top:1017.5px;width:12px;height:2.5px;background:#e0806a;"></div>
<div class="b" style="left:103px;top:943.5px;width:131px;height:16px;background:transparent;border:1px dashed #3a3a3a;"></div>
<div class="b" style="left:103px;top:961.5px;width:65px;height:9px;background:transparent;border:1px dashed #3a3a3a;"></div>
<div class="b" style="left:168px;top:961.5px;width:66px;height:9px;background:transparent;border:1px dashed #3a3a3a;"></div>
<div class="b" style="left:103px;top:970.5px;width:65px;height:47px;background:transparent;border:1px dashed #3a3a3a;"></div>
<div class="b" style="left:168px;top:970.5px;width:66px;height:47px;background:transparent;border:1px dashed #3a3a3a;"></div>
<div class="t" style="left:104.5px;top:951.5px;font-size:7.2px;line-height:8.7px;font-weight:700;color:#333;transform:scaleX(0.584);transform-origin:left top;">CLICK TO EDIT MASTER TITLE STYLE</div>
<div class="b" style="left:106px;top:966.5px;width:44px;height:1.2px;background:#777;"></div>
<div class="b" style="left:171px;top:966.5px;width:44px;height:1.2px;background:#777;"></div>
<div class="b" style="left:112px;top:975.5px;width:16px;height:1px;background:#a0a0a0;"></div><div class="b" style="left:117px;top:979.7px;width:12px;height:1px;background:#a0a0a0;"></div><div class="b" style="left:122px;top:983.9px;width:12px;height:1px;background:#a0a0a0;"></div>
<div class="b" style="left:176px;top:975.5px;width:16px;height:1px;background:#a0a0a0;"></div><div class="b" style="left:181px;top:979.7px;width:12px;height:1px;background:#a0a0a0;"></div><div class="b" style="left:186px;top:983.9px;width:12px;height:1px;background:#a0a0a0;"></div>
<div class="b" style="left:116px;top:985.5px;width:12px;height:8px;background:#eef3f8;border:1px solid #c9d3dd;"></div><div class="b" style="left:130px;top:986.5px;width:4px;height:8px;background:#f0c9a8;"></div><div class="b" style="left:135px;top:988.5px;width:4px;height:6px;background:#a8d4c0;"></div><div class="b" style="left:142px;top:985.5px;width:12px;height:7px;background:#dfeaf3;border:1px solid #c9d3dd;"></div><div class="b" style="left:116px;top:996.5px;width:12px;height:7px;background:#e9eef4;border:1px solid #cdd5dd;"></div><div class="b" style="left:130px;top:997.5px;width:10px;height:6px;background:#eef3f8;border:1px solid #cdd5dd;"></div><div class="b" style="left:143px;top:997.5px;width:10px;height:5px;background:#e6eef5;border:1px solid #cdd5dd;"></div>
<div class="b" style="left:180px;top:985.5px;width:12px;height:8px;background:#eef3f8;border:1px solid #c9d3dd;"></div><div class="b" style="left:194px;top:986.5px;width:4px;height:8px;background:#f0c9a8;"></div><div class="b" style="left:199px;top:988.5px;width:4px;height:6px;background:#a8d4c0;"></div><div class="b" style="left:206px;top:985.5px;width:12px;height:7px;background:#dfeaf3;border:1px solid #c9d3dd;"></div><div class="b" style="left:180px;top:996.5px;width:12px;height:7px;background:#e9eef4;border:1px solid #cdd5dd;"></div><div class="b" style="left:194px;top:997.5px;width:10px;height:6px;background:#eef3f8;border:1px solid #cdd5dd;"></div><div class="b" style="left:207px;top:997.5px;width:10px;height:5px;background:#e6eef5;border:1px solid #cdd5dd;"></div>
<div class="b" style="left:122px;top:1017.5px;width:102px;height:5px;background:transparent;border:1px dashed #555;"></div><div class="b" style="left:178.1px;top:1017.5px;width:1px;height:5px;background:#555;"></div><div class="b" style="left:215.84px;top:1017.5px;width:1px;height:5px;background:#555;"></div>
<div class="b" style="left:272.5px;top:301px;width:25px;height:726px;background:#dcdcdc;"></div>
<div class="b" style="left:272.5px;top:301px;width:25px;height:26px;background:#fff;border:1px solid #d0d0d0;"></div>
<svg class="b" style="left:277px;top:308px;" width="16" height="12" viewBox="0 0 16 12"><path d="M3 9 L8 3.5 L13 9 Z" fill="#777"/></svg>
<div class="b" style="left:272.5px;top:327px;width:25px;height:331px;background:#fff;border:1px solid #c0c0c0;"></div>
<div class="b" style="left:272.5px;top:1000.5px;width:25px;height:25.5px;background:#fff;border:1px solid #d0d0d0;"></div>
<svg class="b" style="left:277px;top:1007px;" width="16" height="12" viewBox="0 0 16 12"><path d="M3 3.5 L8 9 L13 3.5 Z" fill="#777"/></svg>
<div class="b" style="left:301.5px;top:301px;width:1px;height:726px;background:#c6c6c6;"></div>
<div class="b" style="left:302.5px;top:301px;width:1.5px;height:726px;background:#f0f0f0;"></div>
<!-- p5_main -->
<div class="b" style="left:591px;top:304.5px;width:1136px;height:22px;background:#fbfbfb;"></div>
<svg class="b" style="left:591px;top:304px;" width="1136" height="22" viewBox="0 0 1136 22"><path d="M11.4 8 V14.5" stroke="#666" stroke-width="1.1"/><path d="M22.1 10.2 V12.6" stroke="#8a8a8a" stroke-width="1.1"/><path d="M32.8 10.2 V12.6" stroke="#8a8a8a" stroke-width="1.1"/><path d="M43.4 10.2 V12.6" stroke="#8a8a8a" stroke-width="1.1"/><text x="54.1" y="17.3" font-size="15" text-anchor="middle" fill="#555">6</text><path d="M64.8 10.2 V12.6" stroke="#8a8a8a" stroke-width="1.1"/><path d="M75.5 10.2 V12.6" stroke="#8a8a8a" stroke-width="1.1"/><path d="M86.1 10.2 V12.6" stroke="#8a8a8a" stroke-width="1.1"/><path d="M96.8 8 V14.5" stroke="#666" stroke-width="1.1"/><path d="M107.5 10.2 V12.6" stroke="#8a8a8a" stroke-width="1.1"/><path d="M118.1 10.2 V12.6" stroke="#8a8a8a" stroke-width="1.1"/><path d="M128.8 10.2 V12.6" stroke="#8a8a8a" stroke-width="1.1"/><text x="139.5" y="17.3" font-size="15" text-anchor="middle" fill="#555">5</text><path d="M150.2 10.2 V12.6" stroke="#8a8a8a" stroke-width="1.1"/><path d="M160.8 10.2 V12.6" stroke="#8a8a8a" stroke-width="1.1"/><path d="M171.5 10.2 V12.6" stroke="#8a8a8a" stroke-width="1.1"/><path d="M182.2 8 V14.5" stroke="#666" stroke-width="1.1"/><path d="M192.9 10.2 V12.6" stroke="#8a8a8a" stroke-width="1.1"/><path d="M203.5 10.2 V12.6" stroke="#8a8a8a" stroke-width="1.1"/><path d="M214.2 10.2 V12.6" stroke="#8a8a8a" stroke-width="1.1"/><text x="224.9" y="17.3" font-size="15" text-anchor="middle" fill="#555">4</text><path d="M235.6 10.2 V12.6" stroke="#8a8a8a" stroke-width="1.1"/><path d="M246.2 10.2 V12.6" stroke="#8a8a8a" stroke-width="1.1"/><path d="M256.9 10.2 V12.6" stroke="#8a8a8a" stroke-width="1.1"/><path d="M267.6 8 V14.5" stroke="#666" stroke-width="1.1"/><path d="M278.3 10.2 V12.6" stroke="#8a8a8a" stroke-width="1.1"/><path d="M289.0 10.2 V12.6" stroke="#8a8a8a" stroke-width="1.1"/><path d="M299.6 10.2 V12.6" stroke="#8a8a8a" stroke-width="1.1"/><text x="310.3" y="17.3" font-size="15" text-anchor="middle" fill="#555">3</text><path d="M321.0 10.2 V12.6" stroke="#8a8a8a" stroke-width="1.1"/><path d="M331.6 10.2 V12.6" stroke="#8a8a8a" stroke-width="1.1"/><path d="M342.3 10.2 V12.6" stroke="#8a8a8a" stroke-width="1.1"/><path d="M353.0 8 V14.5" stroke="#666" stroke-width="1.1"/><path d="M363.7 10.2 V12.6" stroke="#8a8a8a" stroke-width="1.1"/><path d="M374.4 10.2 V12.6" stroke="#8a8a8a" stroke-width="1.1"/><path d="M385.0 10.2 V12.6" stroke="#8a8a8a" stroke-width="1.1"/><text x="395.7" y="17.3" font-size="15" text-anchor="middle" fill="#555">2</text><path d="M406.4 10.2 V12.6" stroke="#8a8a8a" stroke-width="1.1"/><path d="M417.0 10.2 V12.6" stroke="#8a8a8a" stroke-width="1.1"/><path d="M427.7 10.2 V12.6" stroke="#8a8a8a" stroke-width="1.1"/><path d="M438.4 8 V14.5" stroke="#666" stroke-width="1.1"/><path d="M449.1 10.2 V12.6" stroke="#8a8a8a" stroke-width="1.1"/><path d="M459.8 10.2 V12.6" stroke="#8a8a8a" stroke-width="1.1"/><path d="M470.4 10.2 V12.6" stroke="#8a8a8a" stroke-width="1.1"/><text x="481.1" y="17.3" font-size="15" text-anchor="middle" fill="#555">1</text><path d="M491.8 10.2 V12.6" stroke="#8a8a8a" stroke-width="1.1"/><path d="M502.5 10.2 V12.6" stroke="#8a8a8a" stroke-width="1.1"/><path d="M513.1 10.2 V12.6" stroke="#8a8a8a" stroke-width="1.1"/><path d="M523.8 8 V14.5" stroke="#666" stroke-width="1.1"/><path d="M534.5 10.2 V12.6" stroke="#8a8a8a" stroke-width="1.1"/><path d="M545.2 10.2 V12.6" stroke="#8a8a8a" stroke-width="1.1"/><path d="M555.8 10.2 V12.6" stroke="#8a8a8a" stroke-width="1.1"/><text x="566.5" y="17.3" font-size="15" text-anchor="middle" fill="#555">0</text><path d="M577.2 10.2 V12.6" stroke="#8a8a8a" stroke-width="1.1"/><path d="M587.8 10.2 V12.6" stroke="#8a8a8a" stroke-width="1.1"/><path d="M598.5 10.2 V12.6" stroke="#8a8a8a" stroke-width="1.1"/><path d="M609.2 8 V14.5" stroke="#666" stroke-width="1.1"/><path d="M619.9 10.2 V12.6" stroke="#8a8a8a" stroke-width="1.1"/><path d="M630.5 10.2 V12.6" stroke="#8a8a8a" stroke-width="1.1"/><path d="M641.2 10.2 V12.6" stroke="#8a8a8a" stroke-width="1.1"/><text x="651.9" y="17.3" font-size="15" text-anchor="middle" fill="#555">1</text><path d="M662.6 10.2 V12.6" stroke="#8a8a8a" stroke-width="1.1"/><path d="M673.2 10.2 V12.6" stroke="#8a8a8a" stroke-width="1.1"/><path d="M683.9 10.2 V12.6" stroke="#8a8a8a" stroke-width="1.1"/><path d="M694.6 8 V14.5" stroke="#666" stroke-width="1.1"/><path d="M705.3 10.2 V12.6" stroke="#8a8a8a" stroke-width="1.1"/><path d="M716.0 10.2 V12.6" stroke="#8a8a8a" stroke-width="1.1"/><path d="M726.6 10.2 V12.6" stroke="#8a8a8a" stroke-width="1.1"/><text x="737.3" y="17.3" font-size="15" text-anchor="middle" fill="#555">2</text><path d="M748.0 10.2 V12.6" stroke="#8a8a8a" stroke-width="1.1"/><path d="M758.7 10.2 V12.6" stroke="#8a8a8a" stroke-width="1.1"/><path d="M769.3 10.2 V12.6" stroke="#8a8a8a" stroke-width="1.1"/><path d="M780.0 8 V14.5" stroke="#666" stroke-width="1.1"/><path d="M790.7 10.2 V12.6" stroke="#8a8a8a" stroke-width="1.1"/><path d="M801.3 10.2 V12.6" stroke="#8a8a8a" stroke-width="1.1"/><path d="M812.0 10.2 V12.6" stroke="#8a8a8a" stroke-width="1.1"/><text x="822.7" y="17.3" font-size="15" text-anchor="middle" fill="#555">3</text><path d="M833.4 10.2 V12.6" stroke="#8a8a8a" stroke-width="1.1"/><path d="M844.0 10.2 V12.6" stroke="#8a8a8a" stroke-width="1.1"/><path d="M854.7 10.2 V12.6" stroke="#8a8a8a" stroke-width="1.1"/><path d="M865.4 8 V14.5" stroke="#666" stroke-width="1.1"/><path d="M876.1 10.2 V12.6" stroke="#8a8a8a" stroke-width="1.1"/><path d="M886.8 10.2 V12.6" stroke="#8a8a8a" stroke-width="1.1"/><path d="M897.4 10.2 V12.6" stroke="#8a8a8a" stroke-width="1.1"/><text x="908.1" y="17.3" font-size="15" text-anchor="middle" fill="#555">4</text><path d="M918.8 10.2 V12.6" stroke="#8a8a8a" stroke-width="1.1"/><path d="M929.5 10.2 V12.6" stroke="#8a8a8a" stroke-width="1.1"/><path d="M940.1 10.2 V12.6" stroke="#8a8a8a" stroke-width="1.1"/><path d="M950.8 8 V14.5" stroke="#666" stroke-width="1.1"/><path d="M961.5 10.2 V12.6" stroke="#8a8a8a" stroke-width="1.1"/><path d="M972.2 10.2 V12.6" stroke="#8a8a8a" stroke-width="1.1"/><path d="M982.8 10.2 V12.6" stroke="#8a8a8a" stroke-width="1.1"/><text x="993.5" y="17.3" font-size="15" text-anchor="middle" fill="#555">5</text><path d="M1004.2 10.2 V12.6" stroke="#8a8a8a" stroke-width="1.1"/><path d="M1014.8 10.2 V12.6" stroke="#8a8a8a" stroke-width="1.1"/><path d="M1025.5 10.2 V12.6" stroke="#8a8a8a" stroke-width="1.1"/><path d="M1036.2 8 V14.5" stroke="#666" stroke-width="1.1"/><path d="M1046.9 10.2 V12.6" stroke="#8a8a8a" stroke-width="1.1"/><path d="M1057.5 10.2 V12.6" stroke="#8a8a8a" stroke-width="1.1"/><path d="M1068.2 10.2 V12.6" stroke="#8a8a8a" stroke-width="1.1"/><text x="1078.9" y="17.3" font-size="15" text-anchor="middle" fill="#555">6</text><path d="M1089.6 10.2 V12.6" stroke="#8a8a8a" stroke-width="1.1"/><path d="M1100.2 10.2 V12.6" stroke="#8a8a8a" stroke-width="1.1"/><path d="M1110.9 10.2 V12.6" stroke="#8a8a8a" stroke-width="1.1"/><path d="M1121.6 8 V14.5" stroke="#666" stroke-width="1.1"/><path d="M1132.3 10.2 V12.6" stroke="#8a8a8a" stroke-width="1.1"/></svg>
<div class="b" style="left:310px;top:351px;width:22.5px;height:637px;background:#fbfbfb;"></div>
<div class="b" style="left:310px;top:350px;width:22.5px;height:1px;background:transparent;border-top:1px dotted #e8705a;"></div>
<svg class="b" style="left:309.5px;top:351px;" width="23" height="637" viewBox="0 0 23 637"><path d="M10.2 7.9 H12.6" stroke="#8a8a8a" stroke-width="1.1"/><path d="M8 18.6 H14.5" stroke="#666" stroke-width="1.1"/><path d="M10.2 29.3 H12.6" stroke="#8a8a8a" stroke-width="1.1"/><path d="M10.2 39.9 H12.6" stroke="#8a8a8a" stroke-width="1.1"/><path d="M10.2 50.6 H12.6" stroke="#8a8a8a" stroke-width="1.1"/><text transform="translate(17.3 61.3) rotate(-90)" font-size="15" text-anchor="middle" fill="#555">3</text><path d="M10.2 72.0 H12.6" stroke="#8a8a8a" stroke-width="1.1"/><path d="M10.2 82.6 H12.6" stroke="#8a8a8a" stroke-width="1.1"/><path d="M10.2 93.3 H12.6" stroke="#8a8a8a" stroke-width="1.1"/><path d="M8 104.0 H14.5" stroke="#666" stroke-width="1.1"/><path d="M10.2 114.7 H12.6" stroke="#8a8a8a" stroke-width="1.1"/><path d="M10.2 125.4 H12.6" stroke="#8a8a8a" stroke-width="1.1"/><path d="M10.2 136.0 H12.6" stroke="#8a8a8a" stroke-width="1.1"/><text transform="translate(17.3 146.7) rotate(-90)" font-size="15" text-anchor="middle" fill="#555">2</text><path d="M10.2 157.4 H12.6" stroke="#8a8a8a" stroke-width="1.1"/><path d="M10.2 168.0 H12.6" stroke="#8a8a8a" stroke-width="1.1"/><path d="M10.2 178.7 H12.6" stroke="#8a8a8a" stroke-width="1.1"/><path d="M8 189.4 H14.5" stroke="#666" stroke-width="1.1"/><path d="M10.2 200.1 H12.6" stroke="#8a8a8a" stroke-width="1.1"/><path d="M10.2 210.8 H12.6" stroke="#8a8a8a" stroke-width="1.1"/><path d="M10.2 221.4 H12.6" stroke="#8a8a8a" stroke-width="1.1"/><text transform="translate(17.3 232.1) rotate(-90)" font-size="15" text-anchor="middle" fill="#555">1</text><path d="M10.2 242.8 H12.6" stroke="#8a8a8a" stroke-width="1.1"/><path d="M10.2 253.5 H12.6" stroke="#8a8a8a" stroke-width="1.1"/><path d="M10.2 264.1 H12.6" stroke="#8a8a8a" stroke-width="1.1"/><path d="M8 274.8 H14.5" stroke="#666" stroke-width="1.1"/><path d="M10.2 285.5 H12.6" stroke="#8a8a8a" stroke-width="1.1"/><path d="M10.2 296.1 H12.6" stroke="#8a8a8a" stroke-width="1.1"/><path d="M10.2 306.8 H12.6" stroke="#8a8a8a" stroke-width="1.1"/><text transform="translate(17.3 317.5) rotate(-90)" font-size="15" text-anchor="middle" fill="#555">0</text><path d="M10.2 328.2 H12.6" stroke="#8a8a8a" stroke-width="1.1"/><path d="M10.2 338.9 H12.6" stroke="#8a8a8a" stroke-width="1.1"/><path d="M10.2 349.5 H12.6" stroke="#8a8a8a" stroke-width="1.1"/><path d="M8 360.2 H14.5" stroke="#666" stroke-width="1.1"/><path d="M10.2 370.9 H12.6" stroke="#8a8a8a" stroke-width="1.1"/><path d="M10.2 381.5 H12.6" stroke="#8a8a8a" stroke-width="1.1"/><path d="M10.2 392.2 H12.6" stroke="#8a8a8a" stroke-width="1.1"/><text transform="translate(17.3 402.9) rotate(-90)" font-size="15" text-anchor="middle" fill="#555">1</text><path d="M10.2 413.6 H12.6" stroke="#8a8a8a" stroke-width="1.1"/><path d="M10.2 424.2 H12.6" stroke="#8a8a8a" stroke-width="1.1"/><path d="M10.2 434.9 H12.6" stroke="#8a8a8a" stroke-width="1.1"/><path d="M8 445.6 H14.5" stroke="#666" stroke-width="1.1"/><path d="M10.2 456.3 H12.6" stroke="#8a8a8a" stroke-width="1.1"/><path d="M10.2 467.0 H12.6" stroke="#8a8a8a" stroke-width="1.1"/><path d="M10.2 477.6 H12.6" stroke="#8a8a8a" stroke-width="1.1"/><text transform="translate(17.3 488.3) rotate(-90)" font-size="15" text-anchor="middle" fill="#555">2</text><path d="M10.2 499.0 H12.6" stroke="#8a8a8a" stroke-width="1.1"/><path d="M10.2 509.6 H12.6" stroke="#8a8a8a" stroke-width="1.1"/><path d="M10.2 520.3 H12.6" stroke="#8a8a8a" stroke-width="1.1"/><path d="M8 531.0 H14.5" stroke="#666" stroke-width="1.1"/><path d="M10.2 541.7 H12.6" stroke="#8a8a8a" stroke-width="1.1"/><path d="M10.2 552.4 H12.6" stroke="#8a8a8a" stroke-width="1.1"/><path d="M10.2 563.0 H12.6" stroke="#8a8a8a" stroke-width="1.1"/><text transform="translate(17.3 573.7) rotate(-90)" font-size="15" text-anchor="middle" fill="#555">3</text><path d="M10.2 584.4 H12.6" stroke="#8a8a8a" stroke-width="1.1"/><path d="M10.2 595.0 H12.6" stroke="#8a8a8a" stroke-width="1.1"/><path d="M10.2 605.7 H12.6" stroke="#8a8a8a" stroke-width="1.1"/><path d="M8 616.4 H14.5" stroke="#666" stroke-width="1.1"/><path d="M10.2 627.1 H12.6" stroke="#8a8a8a" stroke-width="1.1"/></svg>
<div class="b" style="left:588px;top:348px;width:1139px;height:641px;background:#fff;box-shadow:0 0 0 1px #a6a6a6;"></div>
<div class="b" style="left:730px;top:453px;width:856px;height:224.5px;background:transparent;border:1px dotted #666;"></div>
<div class="b" style="left:730px;top:685.5px;width:856px;height:155.5px;background:transparent;border:1px dotted #666;"></div>
<div class="b" style="left:806px;top:942.8px;width:421px;height:36.8px;background:transparent;border:1px dotted #555;"></div>
<div class="b" style="left:1235.5px;top:942.8px;width:290px;height:36.8px;background:transparent;border:1px dotted #555;"></div>
<div class="b" style="left:1524.5px;top:942.8px;width:58.5px;height:36.8px;background:transparent;border:1px dotted #555;"></div>
<svg class="b" style="left:730px;top:454px;" width="856" height="223" viewBox="730 454 856 223"><defs><filter id="inl0" filterUnits="userSpaceOnUse" x="798.3" y="514.0" width="143.4" height="76.0" color-interpolation-filters="sRGB"><feMorphology in="SourceAlpha" operator="erode" radius="0 1" result="g"/><feGaussianBlur in="g" stdDeviation="1.2" result="b"/><feComponentTransfer in="b" result="o"><feFuncA type="linear" slope="9.269" intercept="-0.1189"/></feComponentTransfer><feComponentTransfer in="b" result="i"><feFuncA type="linear" slope="3.024" intercept="-1.0604"/></feComponentTransfer><feComponentTransfer in="b" result="c"><feFuncA type="linear" slope="4.987" intercept="-3.5516"/></feComponentTransfer><feComposite in="o" in2="i" operator="out" result="r"/><feComposite in="r" in2="c" operator="over" result="u"/><feFlood flood-color="#3a3a3a" result="f"/><feComposite in="f" in2="u" operator="in"/></filter><filter id="inl1" filterUnits="userSpaceOnUse" x="949.9" y="514.0" width="75.6" height="76.0" color-interpolation-filters="sRGB"><feMorphology in="SourceAlpha" operator="erode" radius="0 1" result="g"/><feGaussianBlur in="g" stdDeviation="1.2" result="b"/><feComponentTransfer in="b" result="o"><feFuncA type="linear" slope="9.269" intercept="-0.1189"/></feComponentTransfer><feComponentTransfer in="b" result="i"><feFuncA type="linear" slope="3.024" intercept="-1.0604"/></feComponentTransfer><feComponentTransfer in="b" result="c"><feFuncA type="linear" slope="4.987" intercept="-3.5516"/></feComponentTransfer><feComposite in="o" in2="i" operator="out" result="r"/><feComposite in="r" in2="c" operator="over" result="u"/><feFlood flood-color="#3a3a3a" result="f"/><feComposite in="f" in2="u" operator="in"/></filter><filter id="inl2" filterUnits="userSpaceOnUse" x="1034.4" y="514.0" width="113.9" height="76.0" color-interpolation-filters="sRGB"><feMorphology in="SourceAlpha" operator="erode" radius="0 1" result="g"/><feGaussianBlur in="g" stdDeviation="1.2" result="b"/><feComponentTransfer in="b" result="o"><feFuncA type="linear" slope="9.023" intercept="-0.1238"/></feComponentTransfer><feComponentTransfer in="b" result="i"><feFuncA type="linear" slope="3.026" intercept="-1.0833"/></feComponentTransfer><feComponentTransfer in="b" result="c"><feFuncA type="linear" slope="5.059" intercept="-3.6356"/></feComponentTransfer><feComposite in="o" in2="i" operator="out" result="r"/><feComposite in="r" in2="c" operator="over" result="u"/><feFlood flood-color="#3a3a3a" result="f"/><feComposite in="f" in2="u" operator="in"/></filter><filter id="inl3" filterUnits="userSpaceOnUse" x="1157.5" y="514.0" width="201.5" height="76.0" color-interpolation-filters="sRGB"><feMorphology in="SourceAlpha" operator="erode" radius="0 1" result="g"/><feGaussianBlur in="g" stdDeviation="1.2" result="b"/><feComponentTransfer in="b" result="o"><feFuncA type="linear" slope="8.200" intercept="-0.1425"/></feComponentTransfer><feComponentTransfer in="b" result="i"><feFuncA type="linear" slope="3.042" intercept="-1.1716"/></feComponentTransfer><feComponentTransfer in="b" result="c"><feFuncA type="linear" slope="5.348" intercept="-3.9672"/></feComponentTransfer><feComposite in="o" in2="i" operator="out" result="r"/><feComposite in="r" in2="c" operator="over" result="u"/><feFlood flood-color="#3a3a3a" result="f"/><feComposite in="f" in2="u" operator="in"/></filter><filter id="inl4" filterUnits="userSpaceOnUse" x="1368.8" y="514.0" width="144.0" height="76.0" color-interpolation-filters="sRGB"><feMorphology in="SourceAlpha" operator="erode" radius="0 1" result="g"/><feGaussianBlur in="g" stdDeviation="1.2" result="b"/><feComponentTransfer in="b" result="o"><feFuncA type="linear" slope="7.433" intercept="-0.1637"/></feComponentTransfer><feComponentTransfer in="b" result="i"><feFuncA type="linear" slope="3.075" intercept="-1.2761"/></feComponentTransfer><feComponentTransfer in="b" result="c"><feFuncA type="linear" slope="5.712" intercept="-4.3726"/></feComponentTransfer><feComposite in="o" in2="i" operator="out" result="r"/><feComposite in="r" in2="c" operator="over" result="u"/><feFlood flood-color="#3a3a3a" result="f"/><feComposite in="f" in2="u" operator="in"/></filter><filter id="inl5" filterUnits="userSpaceOnUse" x="1073.8" y="591.8" width="163.5" height="76.0" color-interpolation-filters="sRGB"><feMorphology in="SourceAlpha" operator="erode" radius="0 1" result="g"/><feGaussianBlur in="g" stdDeviation="1.2" result="b"/><feComponentTransfer in="b" result="o"><feFuncA type="linear" slope="7.459" intercept="-0.1629"/></feComponentTransfer><feComponentTransfer in="b" result="i"><feFuncA type="linear" slope="3.073" intercept="-1.2721"/></feComponentTransfer><feComponentTransfer in="b" result="c"><feFuncA type="linear" slope="5.698" intercept="-4.3567"/></feComponentTransfer><feComposite in="o" in2="i" operator="out" result="r"/><feComposite in="r" in2="c" operator="over" result="u"/><feFlood flood-color="#3a3a3a" result="f"/><feComposite in="f" in2="u" operator="in"/></filter></defs><g filter="url(#inl0)"><text transform="translate(805.95 577.20) scale(0.5752 0.9908)" x="0" y="0" font-size="74.60" fill="#000">CLICK</text></g><g filter="url(#inl1)"><text transform="translate(958.84 577.20) scale(0.5752 0.9908)" x="0" y="0" font-size="74.60" fill="#000">TO</text></g><g filter="url(#inl2)"><text transform="translate(1040.71 577.22) scale(0.5814 0.9916)" x="0" y="0" font-size="74.60" fill="#000">EDIT</text></g><g filter="url(#inl3)"><text transform="translate(1163.59 577.30) scale(0.6042 0.9947)" x="0" y="0" font-size="74.60" fill="#000">MASTER</text></g><g filter="url(#inl4)"><text transform="translate(1377.48 577.39) scale(0.6288 0.9980)" x="0" y="0" font-size="74.60" fill="#000">TITLE</text></g><g filter="url(#inl5)"><text transform="translate(1081.31 655.18) scale(0.6279 0.9979)" x="0" y="0" font-size="74.60" fill="#000">STYLE</text></g></svg>
<div class="t " style="left:969.5px;top:686.5px;font-size:25.5px;line-height:33px;color:#404040;letter-spacing:0.376px;-webkit-text-stroke-width:0;">Click to edit Master subtitle style</div>
<div class="t " style="left:815.5px;top:954px;font-size:10.5px;line-height:14px;color:#8a8a8a;letter-spacing:0.131px;-webkit-text-stroke-width:0;">Footer</div>
<div class="t " style="left:1456px;top:954px;font-size:10.5px;line-height:14px;color:#8a8a8a;letter-spacing:-0.004px;-webkit-text-stroke-width:0;">19 July 2019</div>
<div class="t " style="left:1558.5px;top:954px;font-size:10.5px;line-height:14px;color:#8a8a8a;letter-spacing:0.583px;-webkit-text-stroke-width:0;">‹#›</div>
<div class="b" style="left:579.5px;top:339.5px;width:17px;height:17px;background:#fff;border:2.4px solid #8a8a8a;border-radius:50%;"></div>
<div class="b" style="left:579.5px;top:660px;width:17px;height:17px;background:#fff;border:2.4px solid #8a8a8a;border-radius:50%;"></div>
<div class="b" style="left:579.5px;top:980.5px;width:17px;height:17px;background:#fff;border:2.4px solid #8a8a8a;border-radius:50%;"></div>
<div class="b" style="left:1149px;top:339.5px;width:17px;height:17px;background:#fff;border:2.4px solid #8a8a8a;border-radius:50%;"></div>
<div class="b" style="left:1149px;top:980.5px;width:17px;height:17px;background:#fff;border:2.4px solid #8a8a8a;border-radius:50%;"></div>
<div class="b" style="left:1718.5px;top:339.5px;width:17px;height:17px;background:#fff;border:2.4px solid #8a8a8a;border-radius:50%;"></div>
<div class="b" style="left:1718.5px;top:660px;width:17px;height:17px;background:#fff;border:2.4px solid #8a8a8a;border-radius:50%;"></div>
<div class="b" style="left:1718.5px;top:980.5px;width:17px;height:17px;background:#fff;border:2.4px solid #8a8a8a;border-radius:50%;"></div>
<div class="b" style="left:1973px;top:301px;width:25.5px;height:700px;background:#dcdcdc;"></div>
<div class="b" style="left:1973px;top:301.5px;width:25.5px;height:25px;background:#fff;border:1px solid #d0d0d0;"></div>
<svg class="b" style="left:1978px;top:308px;" width="16" height="12" viewBox="0 0 16 12"><path d="M3 9 L8 3.5 L13 9 Z" fill="#777"/></svg>
<div class="b" style="left:1973px;top:414.5px;width:25.5px;height:41px;background:#fff;border:1px solid #c0c0c0;"></div>
<div class="b" style="left:1973px;top:920px;width:25.5px;height:24px;background:#fff;border:1px solid #d0d0d0;"></div>
<svg class="b" style="left:1978px;top:926px;" width="16" height="12" viewBox="0 0 16 12"><path d="M3 3.5 L8 9 L13 3.5 Z" fill="#777"/></svg>
<div class="b" style="left:1973px;top:944px;width:25.5px;height:57px;background:#e6e6e6;"></div>
<svg class="b" style="left:1978px;top:951px;" width="16" height="16" viewBox="0 0 16 16"><path d="M2.5 7.5 L8 2 L13.5 7.5 Z M2.5 14 L8 8.5 L13.5 14 Z" fill="#777"/></svg>
<svg class="b" style="left:1978px;top:978px;" width="16" height="16" viewBox="0 0 16 16"><path d="M2.5 2 L8 7.5 L13.5 2 Z M2.5 8.5 L8 14 L13.5 8.5 Z" fill="#777"/></svg>
<div class="b" style="left:305px;top:1001px;width:1666px;height:1px;background:#b4b4b4;"></div>
<div class="b" style="left:307px;top:1002px;width:1664px;height:24px;background:#fff;border:1px solid #d0d0d0;"></div>
<div class="b" style="left:332px;top:1002px;width:1px;height:24px;background:#d0d0d0;"></div>
<div class="b" style="left:1945.5px;top:1002px;width:1px;height:24px;background:#d0d0d0;"></div>
<svg class="b" style="left:313px;top:1006px;" width="12" height="16" viewBox="0 0 12 16"><path d="M9 3 L3.5 8 L9 13 Z" fill="#777"/></svg>
<svg class="b" style="left:1952px;top:1006px;" width="12" height="16" viewBox="0 0 12 16"><path d="M3.5 3 L9 8 L3.5 13 Z" fill="#777"/></svg>
<!-- p6_status -->
<div class="b" style="left:0px;top:1027.5px;width:2000px;height:32px;background:#f3f3f3;"></div>
<div class="b" style="left:0px;top:1025.3px;width:2000px;height:4.4px;background:transparent;background:linear-gradient(#c4c4c4,#d6d6d6 35%,#e6e6e6 65%,#f3f3f3);"></div>
<div class="t " style="left:8px;top:1033.5px;font-size:17px;line-height:22px;color:#555;letter-spacing:-0.453px;">Slide Master</div>
<svg class="b" style="left:119px;top:1032px;" width="26" height="24" viewBox="0 0 26 24"><g fill="none" stroke="#666" stroke-width="1.4" stroke-linejoin="round"><path d="M11 4.5 V20.5 M11 4.5 C8 3 5 3 2 4 V19.5 C5 18.5 8 18.5 11 20.5 C13.5 18.8 16 18.5 18 18.8"/><path d="M11 4.5 C14 3 17 3 20 4 V9"/><path d="M13.5 12.5 L16.5 15.8 L22.5 8" stroke-width="1.9"/></g></svg>
<div class="t " style="left:160.5px;top:1033.5px;font-size:17px;line-height:22px;color:#555;letter-spacing:-0.585px;">English (United States)</div>
<svg class="b" style="left:1537px;top:1033px;" width="24" height="22" viewBox="0 0 24 22"><g fill="none" stroke="#666" stroke-width="1.4"><rect x="1.7" y="1.7" width="19.6" height="18.6"/><path d="M6.5 1.7 V20.3"/><rect x="9.5" y="5" width="8" height="6"/><path d="M9.5 15.5 H18"/></g></svg>
<svg class="b" style="left:1583px;top:1033px;" width="24" height="22" viewBox="0 0 24 22"><g fill="none" stroke="#666" stroke-width="1.4"><rect x="1.7" y="1.7" width="8" height="7.6"/><rect x="13" y="1.7" width="8" height="7.6"/><rect x="1.7" y="12.5" width="8" height="7.6"/><rect x="13" y="12.5" width="8" height="7.6"/></g></svg>
<svg class="b" style="left:1630px;top:1033px;" width="24" height="22" viewBox="0 0 24 22"><g fill="none" stroke="#666" stroke-width="1.4"><path d="M11 3 V20 M11 3 C8 1.6 5 1.6 1.7 2.5 V19 C5 18 8 18 11 20 C14 18 17 18 20.3 19 V2.5 C17 1.6 14 1.6 11 3"/><path d="M4 6 H8.5 M4 9.5 H8.5 M4 13 H8.5 M13.5 6 H18 M13.5 9.5 H18 M13.5 13 H18" stroke-width="1.1"/></g></svg>
<svg class="b" style="left:1678px;top:1033px;" width="24" height="22" viewBox="0 0 24 22"><g fill="none" stroke="#666" stroke-width="1.4"><path d="M1 2 H21"/><rect x="3.2" y="2" width="16.6" height="11.5"/><path d="M11.5 13.5 V19 M7.5 19.5 H15.5 M8 7.5 H15"/></g></svg>
<div class="b" style="left:1718.5px;top:1043px;width:11.5px;height:2.2px;background:#555;"></div>
<div class="b" style="left:1736px;top:1043.3px;width:154px;height:1.6px;background:#a6a6a6;"></div>
<div class="b" style="left:1812.8px;top:1040px;width:1.4px;height:8px;background:#a6a6a6;"></div>
<div class="b" style="left:1775px;top:1035.5px;width:8.5px;height:18.5px;background:#777;"></div>
<div class="b" style="left:1897px;top:1043px;width:12px;height:2.2px;background:#555;"></div>
<div class="b" style="left:1901.9px;top:1038.2px;width:2.2px;height:12px;background:#555;"></div>
<div class="t " style="left:1922.5px;top:1033.5px;font-size:17px;line-height:22px;color:#555;letter-spacing:-1.263px;">57%</div>
<svg class="b" style="left:1972px;top:1034px;" width="20" height="20" viewBox="0 0 20 20"><g fill="none" stroke="#666" stroke-width="1.4"><rect x="1.7" y="1.7" width="16.6" height="16.6" stroke-width="1.3"/><path d="M10 1.7 V5.5 M10 14.5 V18.3 M1.7 10 H5.5 M14.5 10 H18.3" stroke-width="1.2"/><path d="M8.3 4 L10 5.8 L11.7 4 M8.3 16 L10 14.2 L11.7 16 M4 8.3 L5.8 10 L4 11.7 M16 8.3 L14.2 10 L16 11.7" stroke-width="1"/></g></svg>
<!-- p7_overlay -->
<div class="b" style="left:1396px;top:177px;width:208px;height:42px;background:#fff;"></div>
<div class="b" style="left:1396px;top:219px;width:208px;height:39px;background:#d0d0d0;"></div>
<svg class="b" style="left:1407px;top:183px;" width="30" height="30" viewBox="0 0 30 30"><rect x="3" y="3" width="17" height="17" fill="#fbd691" stroke="#f3b95b" stroke-width="1.6"/><rect x="12.5" y="12.5" width="14" height="14" fill="#fff" stroke="#3a3a3a" stroke-width="1.8"/></svg>
<div class="t " style="left:1445.5px;top:187px;font-size:18.5px;line-height:24px;color:#444;letter-spacing:-0.506px;">Send Backward</div>
<div class="b" style="left:1491.5px;top:206.6px;width:12px;height:1.6px;background:#444;"></div>
<svg class="b" style="left:1407px;top:223px;" width="30" height="30" viewBox="0 0 30 30"><rect x="7.5" y="7.5" width="13" height="13" fill="#fbd691" stroke="#f3b95b" stroke-width="1.5"/><rect x="2.5" y="2.5" width="9" height="9" fill="#fff" stroke="#3a3a3a" stroke-width="1.7"/><rect x="17.5" y="17" width="9" height="9" fill="#fff" stroke="#3a3a3a" stroke-width="1.7"/></svg>
<div class="t " style="left:1445.5px;top:227px;font-size:18.5px;line-height:24px;color:#444;letter-spacing:-0.322px;">Send to Back</div>
<div class="b" style="left:1543px;top:246.6px;width:9.5px;height:1.6px;background:#444;"></div>
<div class="b" style="left:1389px;top:138px;width:221px;height:126px;background:transparent;border:6.5px solid #444446;"></div>
</div>
</body></html>
